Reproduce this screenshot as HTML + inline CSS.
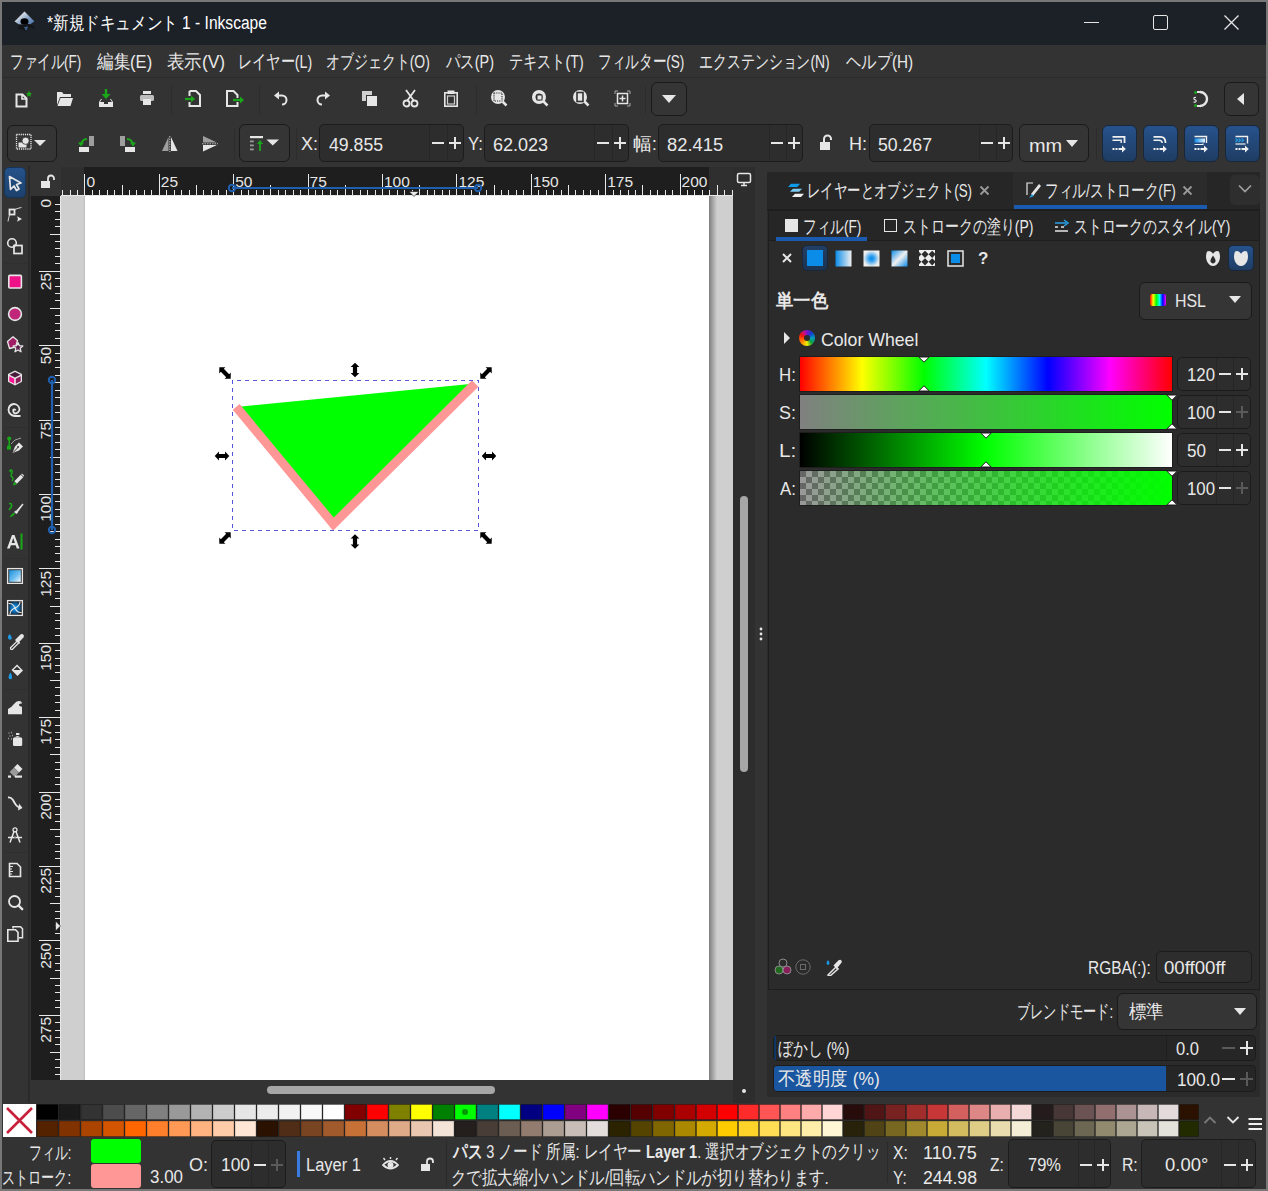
<!DOCTYPE html><html><head><meta charset="utf-8"><style>
html,body{margin:0;padding:0;}
body{width:1268px;height:1191px;position:relative;overflow:hidden;background:#777777;font-family:"Liberation Sans",sans-serif;}
div{box-sizing:border-box;}
svg{display:block;}
</style></head><body>
<div style="position:absolute;left:2px;top:2px;width:1264px;height:1187px;background:#333333;"></div>
<div style="position:absolute;left:2px;top:2px;width:1264px;height:43px;background:#1c2128;"></div>
<div style="position:absolute;left:2px;top:77px;width:1264px;height:1px;background:#2b2b2b;"></div>
<svg style="position:absolute;left:13px;top:10px;" width="24" height="24" viewBox="0 0 24 24"><defs><linearGradient id="lg0" x1="0" y1="0" x2="1" y2="1"><stop offset="0.2" stop-color="#f2f2f2"/><stop offset="0.55" stop-color="#8aa5c8"/><stop offset="1" stop-color="#2f5f9a"/></linearGradient></defs><path d="M11.5 1 L22 11.5 L17 15 L12 16.5 L6 15 L1 11.5 Z" fill="url(#lg0)" stroke="#111" stroke-width="0.8"/><ellipse cx="11.5" cy="11.5" rx="4" ry="3.3" fill="#000"/><path d="M6 14.5 L16 14 L21 16.5 L15 18.5 L13 22 L10 19.5 L5 19 Z" fill="#151515"/><path d="M11 17 L15.5 16.5 L13 21 Z" fill="#3a5f8a"/><circle cx="20.5" cy="17.5" r="1" fill="#111"/></svg>
<div class="t" style="position:absolute;left:47.00px;top:11.50px;font-size:18px;line-height:23px;color:#ffffff;white-space:nowrap;transform:scaleX(0.8656);transform-origin:0 50%;">*新規ドキュメント 1 - Inkscape</div>
<div style="position:absolute;left:1084px;top:22px;width:15px;height:1px;background:#e6e6e6;"></div>
<div style="position:absolute;left:1153px;top:15px;width:15px;height:15px;border:1.5px solid #e6e6e6;border-radius:2px;"></div>
<svg style="position:absolute;left:1224px;top:15px;" width="15" height="15" viewBox="0 0 15 15"><path d="M0.5 0.5 L14.5 14.5 M14.5 0.5 L0.5 14.5" stroke="#e6e6e6" stroke-width="1.3"/></svg>
<div class="t" style="position:absolute;left:9.58px;top:49.10px;font-size:19px;line-height:25px;color:#e8e8e8;white-space:nowrap;transform:scaleX(0.7113);transform-origin:0 50%;">ファイル(F)</div>
<div class="t" style="position:absolute;left:97.00px;top:49.10px;font-size:19px;line-height:25px;color:#e8e8e8;white-space:nowrap;transform:scaleX(0.8710);transform-origin:0 50%;">編集(E)</div>
<div class="t" style="position:absolute;left:167.08px;top:49.10px;font-size:19px;line-height:25px;color:#e8e8e8;white-space:nowrap;transform:scaleX(0.9180);transform-origin:0 50%;">表示(V)</div>
<div class="t" style="position:absolute;left:237.76px;top:49.10px;font-size:19px;line-height:25px;color:#e8e8e8;white-space:nowrap;transform:scaleX(0.7474);transform-origin:0 50%;">レイヤー(L)</div>
<div class="t" style="position:absolute;left:326.27px;top:49.10px;font-size:19px;line-height:25px;color:#e8e8e8;white-space:nowrap;transform:scaleX(0.7338);transform-origin:0 50%;">オブジェクト(O)</div>
<div class="t" style="position:absolute;left:446.00px;top:49.10px;font-size:19px;line-height:25px;color:#e8e8e8;white-space:nowrap;transform:scaleX(0.7581);transform-origin:0 50%;">パス(P)</div>
<div class="t" style="position:absolute;left:509.26px;top:49.10px;font-size:19px;line-height:25px;color:#e8e8e8;white-space:nowrap;transform:scaleX(0.7449);transform-origin:0 50%;">テキスト(T)</div>
<div class="t" style="position:absolute;left:597.56px;top:49.10px;font-size:19px;line-height:25px;color:#e8e8e8;white-space:nowrap;transform:scaleX(0.7179);transform-origin:0 50%;">フィルター(S)</div>
<div class="t" style="position:absolute;left:699.27px;top:49.10px;font-size:19px;line-height:25px;color:#e8e8e8;white-space:nowrap;transform:scaleX(0.7330);transform-origin:0 50%;">エクステンション(N)</div>
<div class="t" style="position:absolute;left:846.00px;top:49.10px;font-size:19px;line-height:25px;color:#e8e8e8;white-space:nowrap;transform:scaleX(0.8049);transform-origin:0 50%;">ヘルプ(H)</div>
<div style="position:absolute;left:171px;top:86px;width:1px;height:28px;background:#2c2c2c;"></div>
<div style="position:absolute;left:259px;top:86px;width:1px;height:28px;background:#2c2c2c;"></div>
<div style="position:absolute;left:476px;top:86px;width:1px;height:28px;background:#2c2c2c;"></div>
<div style="position:absolute;left:645px;top:86px;width:1px;height:28px;background:#2c2c2c;"></div>
<svg style="position:absolute;left:14px;top:90px;" width="18" height="18" viewBox="0 0 18 18"><path d="M2.5 4.5 H8.5 L12.5 8.5 V16.5 H2.5 Z" fill="none" stroke="#e6e6e6" stroke-width="2" stroke-linejoin="miter"/><path d="M8 4 V9 H13" fill="none" stroke="#e6e6e6" stroke-width="1.6"/><path d="M15 0.5 L16 3 L18 3 L16.5 4.5 L17.2 7 L15 5.6 L12.8 7 L13.5 4.5 L12 3 L14 3Z" fill="#1aa81a"/></svg>
<svg style="position:absolute;left:56px;top:91px;" width="18" height="16" viewBox="0 0 18 16"><path d="M1 1 H6 L7.5 3 H15 V6 H4 L1 14 Z" fill="#e6e6e6"/><path d="M4.5 7 H17 L14.5 15 H1.5 Z" fill="#e6e6e6"/></svg>
<svg style="position:absolute;left:98px;top:88px;" width="16" height="20" viewBox="0 0 16 20"><path d="M8 1 V9" stroke="#1aa81a" stroke-width="2.4"/><path d="M3.5 6 L8 11 L12.5 6Z" fill="#1aa81a"/><path d="M3 11 L1 14 V19 H15 V14 L13 11 H12 L14 14 H10 V16 H6 V14 H2 L4 11Z" fill="#e6e6e6"/></svg>
<svg style="position:absolute;left:139px;top:90px;" width="16" height="16" viewBox="0 0 16 16"><rect x="4" y="1" width="8" height="3" fill="#e6e6e6"/><rect x="1" y="5" width="14" height="6" rx="1.5" fill="#bdbdbd"/><rect x="4" y="9" width="8" height="6" fill="#e6e6e6"/></svg>
<svg style="position:absolute;left:185px;top:90px;" width="18" height="17" viewBox="0 0 18 17"><path d="M4.5 1 H11 L15 5 V16 H4.5 V12 M4.5 6 V1" fill="none" stroke="#e6e6e6" stroke-width="2"/><path d="M0 9 H8" stroke="#1aa81a" stroke-width="2.2"/><path d="M6 5.5 L10 9 L6 12.5Z" fill="#1aa81a"/></svg>
<svg style="position:absolute;left:226px;top:90px;" width="20" height="17" viewBox="0 0 20 17"><path d="M11.5 8 V5 L7.5 1 H1 V16 H11.5 V12" fill="none" stroke="#e6e6e6" stroke-width="2"/><path d="M7 10 H15" stroke="#1aa81a" stroke-width="2.2"/><path d="M14 6.5 L18 10 L14 13.5Z" fill="#1aa81a"/></svg>
<svg style="position:absolute;left:273px;top:91px;" width="16" height="16" viewBox="0 0 16 16"><path d="M5 4.5 H9 A4.5 4.5 0 0 1 9 13.5" fill="none" stroke="#e6e6e6" stroke-width="2"/><path d="M1 4.5 L6 0.5 V8.5Z" fill="#e6e6e6"/></svg>
<svg style="position:absolute;left:315px;top:91px;" width="16" height="16" viewBox="0 0 16 16"><path d="M11 4.5 H7 A4.5 4.5 0 0 0 7 13.5" fill="none" stroke="#e6e6e6" stroke-width="2"/><path d="M15 4.5 L10 0.5 V8.5Z" fill="#e6e6e6"/></svg>
<svg style="position:absolute;left:361px;top:90px;" width="18" height="18" viewBox="0 0 18 18"><rect x="1" y="1" width="10" height="10" fill="#cfcfcf"/><rect x="5.5" y="5.5" width="11" height="11" fill="#e6e6e6" stroke="#333" stroke-width="1"/></svg>
<svg style="position:absolute;left:402px;top:89px;" width="18" height="19" viewBox="0 0 18 19"><path d="M4 1 L12 12 M13 1 L5 12" stroke="#e6e6e6" stroke-width="1.8"/><circle cx="4.5" cy="14.5" r="3" fill="none" stroke="#e6e6e6" stroke-width="1.8"/><circle cx="12.5" cy="14.5" r="3" fill="none" stroke="#e6e6e6" stroke-width="1.8"/></svg>
<svg style="position:absolute;left:443px;top:89px;" width="16" height="19" viewBox="0 0 16 19"><rect x="1.8" y="3.8" width="12.4" height="13.4" fill="none" stroke="#e6e6e6" stroke-width="1.6"/><rect x="4.5" y="1.5" width="7" height="3.5" fill="#e6e6e6"/><rect x="4.5" y="7" width="7" height="8" fill="none" stroke="#cfcfcf" stroke-width="1.2"/></svg>
<svg style="position:absolute;left:490px;top:89px;" width="18" height="18" viewBox="0 0 18 18"><circle cx="8" cy="8" r="7" fill="#e6e6e6"/><path d="M12 12 L16.5 16.5" stroke="#e6e6e6" stroke-width="2.5"/><rect x="4" y="4" width="8" height="8" fill="none" stroke="#333" stroke-width="1.2" stroke-dasharray="1.2 1"/></svg>
<svg style="position:absolute;left:531px;top:89px;" width="18" height="18" viewBox="0 0 18 18"><circle cx="8" cy="8" r="7" fill="#e6e6e6"/><path d="M12 12 L16.5 16.5" stroke="#e6e6e6" stroke-width="2.5"/><circle cx="8" cy="8" r="3.5" fill="#333"/><rect x="6" y="6" width="5" height="5" fill="#e6e6e6" stroke="#333"/></svg>
<svg style="position:absolute;left:572px;top:89px;" width="18" height="18" viewBox="0 0 18 18"><circle cx="8" cy="8" r="7" fill="#e6e6e6"/><path d="M12 12 L16.5 16.5" stroke="#e6e6e6" stroke-width="2.5"/><rect x="5" y="3.5" width="6" height="9" fill="none" stroke="#333" stroke-width="1.6"/></svg>
<svg style="position:absolute;left:614px;top:90px;" width="18" height="18" viewBox="0 0 18 18"><path d="M1 4 V1 H4 M13 1 H16 V4 M16 13 V16 H13 M4 16 H1 V13" fill="none" stroke="#aaa" stroke-width="1"/><rect x="3.5" y="3.5" width="10" height="10" fill="none" stroke="#e6e6e6" stroke-width="1.5"/><path d="M8.5 5.5 V11.5 M5.5 8.5 H11.5" stroke="#e6e6e6" stroke-width="1.5"/></svg>
<div style="position:absolute;left:651px;top:82px;width:36px;height:34px;background:#353535;border:1.5px solid #1a1a1a;border-radius:6px;"></div>
<svg style="position:absolute;left:661px;top:94px;" width="16" height="10" viewBox="0 0 16 10"><path d="M1 1 H15 L8 9Z" fill="#e6e6e6"/></svg>
<svg style="position:absolute;left:1191px;top:90px;" width="18" height="18" viewBox="0 0 18 18"><path d="M9 2 A7 7 0 1 1 9 16" fill="none" stroke="#e6e6e6" stroke-width="2.4"/><path d="M9 2 H6 M9 16 H6" stroke="#e6e6e6" stroke-width="2"/><circle cx="4.5" cy="2.5" r="1.5" fill="#1aa81a"/><circle cx="4.5" cy="15.5" r="1.5" fill="#1aa81a"/><path d="M5 7.5 Q3 7 2.8 8.5 Q3 9.5 4.2 9.8 Q5.5 10.3 5 11.5 Q4.5 12.5 2.5 12" fill="none" stroke="#e6e6e6" stroke-width="1.2"/></svg>
<div style="position:absolute;left:1224px;top:82px;width:35px;height:34px;background:#353535;border:1.5px solid #1a1a1a;border-radius:6px;"></div>
<svg style="position:absolute;left:1236px;top:92px;" width="10" height="14" viewBox="0 0 10 14"><path d="M8 1 V13 L1 7Z" fill="#e6e6e6"/></svg>
<div style="position:absolute;left:7px;top:125px;width:50px;height:37px;background:#353535;border:1.5px solid #1a1a1a;border-radius:6px;"></div>
<svg style="position:absolute;left:14px;top:132px;" width="36" height="20" viewBox="0 0 36 20"><rect x="2.5" y="2.5" width="14.5" height="14.5" fill="none" stroke="#e6e6e6" stroke-width="1.3" stroke-dasharray="1.2 0.9"/><rect x="4.5" y="10.5" width="8" height="5" fill="#e6e6e6"/><circle cx="11.6" cy="8.8" r="3.6" fill="#e6e6e6" stroke="#353535" stroke-width="0.8"/><path d="M20 8 H32 L26 14Z" fill="#e6e6e6"/></svg>
<div style="position:absolute;left:234px;top:128px;width:1px;height:32px;background:#2c2c2c;"></div>
<div style="position:absolute;left:296px;top:128px;width:1px;height:32px;background:#2c2c2c;"></div>
<div style="position:absolute;left:1096px;top:128px;width:1px;height:32px;background:#2c2c2c;"></div>
<svg style="position:absolute;left:78px;top:135px;" width="18" height="18" viewBox="0 0 18 18"><rect x="11" y="1" width="5" height="10" fill="#9e9e9e"/><rect x="1" y="12" width="10" height="5" fill="#e6e6e6"/><path d="M3 10 A6 6 0 0 1 9 4" fill="none" stroke="#1aa81a" stroke-width="1.8"/><path d="M0 7.5 L3 11.5 L6 7.5Z" fill="#1aa81a"/></svg>
<svg style="position:absolute;left:119px;top:135px;" width="18" height="18" viewBox="0 0 18 18"><rect x="1" y="1" width="5" height="10" fill="#9e9e9e"/><rect x="6" y="12" width="10" height="5" fill="#e6e6e6"/><path d="M8 4 A6 6 0 0 1 14 10" fill="none" stroke="#1aa81a" stroke-width="1.8"/><path d="M11 7.5 L14 11.5 L17 7.5Z" fill="#1aa81a"/></svg>
<svg style="position:absolute;left:161px;top:135px;" width="18" height="18" viewBox="0 0 18 18"><path d="M7.5 2 V16 L1 16Z" fill="#9e9e9e"/><path d="M10 2 V16 L16.5 16Z" fill="#e6e6e6"/><path d="M8.8 1 V17" stroke="#e6e6e6" stroke-width="0.8" stroke-dasharray="1.5 1"/></svg>
<svg style="position:absolute;left:201px;top:135px;" width="18" height="18" viewBox="0 0 18 18"><path d="M2 7.5 H16 L2 1Z" fill="#9e9e9e"/><path d="M2 10 H16 L2 16.5Z" fill="#e6e6e6"/><path d="M1 8.8 H17" stroke="#e6e6e6" stroke-width="0.8" stroke-dasharray="1.5 1"/></svg>
<div style="position:absolute;left:239px;top:124px;width:51px;height:38px;background:#353535;border:1.5px solid #1a1a1a;border-radius:6px;"></div>
<svg style="position:absolute;left:247px;top:132px;" width="36" height="22" viewBox="0 0 36 22"><rect x="3" y="4" width="13" height="2.2" fill="#e6e6e6"/><rect x="3" y="8.5" width="3.8" height="1.8" fill="#9a9a9a"/><rect x="3" y="12.5" width="3.8" height="1.8" fill="#9a9a9a"/><rect x="3" y="16.5" width="3.8" height="1.8" fill="#9a9a9a"/><path d="M13 19 V11" stroke="#1aa81a" stroke-width="1.8"/><path d="M10 12 L13 8 L16 12Z" fill="#1aa81a"/><path d="M19.5 7.5 H32 L25.75 13.5Z" fill="#e6e6e6"/></svg>
<div class="t" style="position:absolute;left:301.00px;top:133.30px;font-size:18px;line-height:23px;color:#e8e8e8;white-space:nowrap;">X:</div>
<div style="position:absolute;left:319px;top:124px;width:145px;height:38px;background:#2d2d2d;border:1px solid #1c1c1c;border-radius:5px;"></div>
<div style="position:absolute;left:429px;top:125px;width:1px;height:36px;background:#262626;"></div>
<div style="position:absolute;left:447px;top:125px;width:1px;height:36px;background:#262626;"></div>
<div class="t" style="position:absolute;left:329.00px;top:133.80px;font-size:18px;line-height:23px;color:#e8e8e8;white-space:nowrap;transform:scaleX(0.9815);transform-origin:0 50%;">49.855</div>
<div style="position:absolute;left:432px;top:142px;width:12px;height:2px;background:#e6e6e6;"></div>
<div style="position:absolute;left:449px;top:142px;width:12px;height:2px;background:#e6e6e6;"></div>
<div style="position:absolute;left:454px;top:137px;width:2px;height:12px;background:#e6e6e6;"></div>
<div class="t" style="position:absolute;left:468.07px;top:133.30px;font-size:18px;line-height:23px;color:#e8e8e8;white-space:nowrap;transform:scaleX(0.9286);transform-origin:0 50%;">Y:</div>
<div style="position:absolute;left:484px;top:124px;width:145px;height:38px;background:#2d2d2d;border:1px solid #1c1c1c;border-radius:5px;"></div>
<div style="position:absolute;left:594px;top:125px;width:1px;height:36px;background:#262626;"></div>
<div style="position:absolute;left:612px;top:125px;width:1px;height:36px;background:#262626;"></div>
<div class="t" style="position:absolute;left:493.00px;top:133.80px;font-size:18px;line-height:23px;color:#e8e8e8;white-space:nowrap;">62.023</div>
<div style="position:absolute;left:597px;top:142px;width:12px;height:2px;background:#e6e6e6;"></div>
<div style="position:absolute;left:614px;top:142px;width:12px;height:2px;background:#e6e6e6;"></div>
<div style="position:absolute;left:619px;top:137px;width:2px;height:12px;background:#e6e6e6;"></div>
<div class="t" style="position:absolute;left:632.95px;top:133.30px;font-size:18px;line-height:23px;color:#e8e8e8;white-space:nowrap;transform:scaleX(1.0476);transform-origin:0 50%;">幅:</div>
<div style="position:absolute;left:658px;top:124px;width:145px;height:38px;background:#2d2d2d;border:1px solid #1c1c1c;border-radius:5px;"></div>
<div style="position:absolute;left:769px;top:125px;width:1px;height:36px;background:#262626;"></div>
<div style="position:absolute;left:786px;top:125px;width:1px;height:36px;background:#262626;"></div>
<div class="t" style="position:absolute;left:666.98px;top:133.80px;font-size:18px;line-height:23px;color:#e8e8e8;white-space:nowrap;transform:scaleX(1.0189);transform-origin:0 50%;">82.415</div>
<div style="position:absolute;left:771px;top:142px;width:12px;height:2px;background:#e6e6e6;"></div>
<div style="position:absolute;left:788px;top:142px;width:12px;height:2px;background:#e6e6e6;"></div>
<div style="position:absolute;left:793px;top:137px;width:2px;height:12px;background:#e6e6e6;"></div>
<svg style="position:absolute;left:818px;top:134px;" width="18" height="18" viewBox="0 0 18 18"><path d="M6 8 V5 A3.5 3.5 0 0 1 13 5 V6" fill="none" stroke="#e6e6e6" stroke-width="2"/><rect x="2" y="8" width="10" height="8" fill="#e6e6e6"/></svg>
<div class="t" style="position:absolute;left:849.00px;top:133.30px;font-size:18px;line-height:23px;color:#e8e8e8;white-space:nowrap;">H:</div>
<div style="position:absolute;left:869px;top:124px;width:144px;height:38px;background:#2d2d2d;border:1px solid #1c1c1c;border-radius:5px;"></div>
<div style="position:absolute;left:979px;top:125px;width:1px;height:36px;background:#262626;"></div>
<div style="position:absolute;left:996px;top:125px;width:1px;height:36px;background:#262626;"></div>
<div class="t" style="position:absolute;left:878.02px;top:133.80px;font-size:18px;line-height:23px;color:#e8e8e8;white-space:nowrap;transform:scaleX(0.9811);transform-origin:0 50%;">50.267</div>
<div style="position:absolute;left:981px;top:142px;width:12px;height:2px;background:#e6e6e6;"></div>
<div style="position:absolute;left:998px;top:142px;width:12px;height:2px;background:#e6e6e6;"></div>
<div style="position:absolute;left:1003px;top:137px;width:2px;height:12px;background:#e6e6e6;"></div>
<div style="position:absolute;left:1019px;top:124px;width:70px;height:38px;background:#353535;border:1.5px solid #1a1a1a;border-radius:6px;"></div>
<div class="t" style="position:absolute;left:1028.89px;top:135.30px;font-size:18px;line-height:23px;color:#e8e8e8;white-space:nowrap;transform:scaleX(1.1071);transform-origin:0 50%;">mm</div>
<svg style="position:absolute;left:1065px;top:139px;" width="14" height="10" viewBox="0 0 14 10"><path d="M1 1 H13 L7 8Z" fill="#e6e6e6"/></svg>
<div style="position:absolute;left:1102px;top:125px;width:35px;height:37px;background:linear-gradient(#26528c,#1f3d63);border:1px solid #18273a;border-radius:6px;"></div>
<div style="position:absolute;left:1143px;top:125px;width:35px;height:37px;background:linear-gradient(#26528c,#1f3d63);border:1px solid #18273a;border-radius:6px;"></div>
<div style="position:absolute;left:1184px;top:125px;width:35px;height:37px;background:linear-gradient(#26528c,#1f3d63);border:1px solid #18273a;border-radius:6px;"></div>
<div style="position:absolute;left:1225px;top:125px;width:35px;height:37px;background:linear-gradient(#26528c,#1f3d63);border:1px solid #18273a;border-radius:6px;"></div>
<svg width="0" height="0" style="position:absolute"><defs><linearGradient id="bg3"><stop offset="0" stop-color="#0c8ce9"/><stop offset="1" stop-color="#e8f4ff"/></linearGradient></defs></svg>
<svg style="position:absolute;left:1102px;top:125px;" width="35" height="37" viewBox="0 0 35 37"><path d="M10.5 11.8 H22.5 V18" fill="none" stroke="#f0f0f0" stroke-width="1.8"/><path d="M10.5 15.2 H19.2 V18" fill="none" stroke="#f0f0f0" stroke-width="1.4"/><rect x="10.5" y="23" width="2" height="2" fill="#f0f0f0"/><rect x="13.5" y="23" width="2" height="2" fill="#f0f0f0"/><path d="M16.5 24 H22" stroke="#f0f0f0" stroke-width="2"/><path d="M20 20.5 L23.8 24 L20 27.5Z" fill="#f0f0f0"/></svg>
<svg style="position:absolute;left:1143px;top:125px;" width="35" height="37" viewBox="0 0 35 37"><path d="M10.5 11.8 H17.5 Q22.5 11.8 22.5 18" fill="none" stroke="#f0f0f0" stroke-width="1.8"/><path d="M10.5 15.2 H16 Q19.2 15.2 19.2 18" fill="none" stroke="#f0f0f0" stroke-width="1.4"/><rect x="10.5" y="23" width="2" height="2" fill="#f0f0f0"/><rect x="13.5" y="23" width="2" height="2" fill="#f0f0f0"/><path d="M16.5 24 H22" stroke="#f0f0f0" stroke-width="2"/><path d="M20 20.5 L23.8 24 L20 27.5Z" fill="#f0f0f0"/></svg>
<svg style="position:absolute;left:1184px;top:125px;" width="35" height="37" viewBox="0 0 35 37"><path d="M10.5 11.5 H22.5 V18" fill="none" stroke="#f0f0f0" stroke-width="1.4"/><rect x="10.5" y="13.5" width="10.5" height="4" fill="url(#bg3)"/><path d="M10.5 19.5 H19 V18.5" fill="none" stroke="#f0f0f0" stroke-width="1.2"/><rect x="10.5" y="23" width="2" height="2" fill="#f0f0f0"/><rect x="13.5" y="23" width="2" height="2" fill="#f0f0f0"/><path d="M16.5 24 H22" stroke="#f0f0f0" stroke-width="2"/><path d="M20 20.5 L23.8 24 L20 27.5Z" fill="#f0f0f0"/></svg>
<svg style="position:absolute;left:1225px;top:125px;" width="35" height="37" viewBox="0 0 35 37"><path d="M10.5 11.5 H22.5 V18.5" fill="none" stroke="#f0f0f0" stroke-width="1.4"/><path d="M10.5 13.5 L12.5 15.2 L10.5 17 M13.5 13.5 L15.5 15.2 L13.5 17 M16.5 13.5 L18.5 15.2 L16.5 17" fill="none" stroke="#29a3e8" stroke-width="1.1"/><path d="M10.5 19 H20.5" stroke="#f0f0f0" stroke-width="1.2"/><rect x="10.5" y="23" width="2" height="2" fill="#f0f0f0"/><rect x="13.5" y="23" width="2" height="2" fill="#f0f0f0"/><path d="M16.5 24 H22" stroke="#f0f0f0" stroke-width="2"/><path d="M20 20.5 L23.8 24 L20 27.5Z" fill="#f0f0f0"/></svg>
<div style="position:absolute;left:28px;top:166px;width:2px;height:937px;background:#2a2a2a;"></div>
<div style="position:absolute;left:4px;top:167px;width:22px;height:31px;background:linear-gradient(#24528a,#1d416c);border:1px solid #173559;border-radius:5px;"></div>
<div style="position:absolute;left:4px;top:263px;width:24px;height:1px;background:#2f2f2f;"></div>
<div style="position:absolute;left:4px;top:427px;width:24px;height:1px;background:#2f2f2f;"></div>
<div style="position:absolute;left:4px;top:558px;width:24px;height:1px;background:#2f2f2f;"></div>
<div style="position:absolute;left:4px;top:689px;width:24px;height:1px;background:#2f2f2f;"></div>
<div style="position:absolute;left:4px;top:852px;width:24px;height:1px;background:#2f2f2f;"></div>
<svg width="0" height="0" style="position:absolute"><defs><linearGradient id="gr1" x1="0" y1="0" x2="1" y2="1"><stop offset="0" stop-color="#1a8fd8"/><stop offset="0.55" stop-color="#6fbff0"/><stop offset="1" stop-color="#f4f9ff"/></linearGradient><radialGradient id="mr1"><stop offset="0" stop-color="#29a8ff"/><stop offset="0.6" stop-color="#0b5fa0"/><stop offset="1" stop-color="#222"/></radialGradient></defs></svg>
<svg style="position:absolute;left:6px;top:174px;" width="18" height="18" viewBox="0 0 18 18"><path d="M3.5 2.5 L15 9 L10.5 10.5 L13 15 L10.5 16.5 L8 12 L4.5 15.5 Z" fill="none" stroke="#e6e6e6" stroke-width="1.7" stroke-linejoin="round"/></svg>
<svg style="position:absolute;left:6px;top:206px;" width="18" height="18" viewBox="0 0 18 18"><rect x="3.5" y="3.5" width="5" height="5" fill="none" stroke="#e6e6e6" stroke-width="1.8"/><path d="M9 3.5 Q12 2 15.5 1.5 M3.5 9 Q2.5 12 2 15.5" stroke="#e6e6e6" stroke-width="0.9" fill="none"/><path d="M11 10.2 L16 13 L11 15.8 L12 13Z" fill="#e6e6e6"/></svg>
<svg style="position:absolute;left:6px;top:237px;" width="18" height="18" viewBox="0 0 18 18"><circle cx="6" cy="6" r="4.3" fill="none" stroke="#e6e6e6" stroke-width="1.6"/><rect x="8" y="8.5" width="8" height="8" fill="none" stroke="#e6e6e6" stroke-width="1.7"/><path d="M7 9.5 L9.5 7" stroke="#e6e6e6" stroke-width="0.8"/></svg>
<svg style="position:absolute;left:6px;top:272px;" width="18" height="18" viewBox="0 0 18 18"><rect x="2.8" y="3.4" width="12.6" height="12.6" rx="1" fill="#ee1188" stroke="#e6e6e6" stroke-width="1.6"/></svg>
<svg style="position:absolute;left:6px;top:305px;" width="18" height="18" viewBox="0 0 18 18"><circle cx="9" cy="9" r="6.4" fill="#c0267a" stroke="#e6e6e6" stroke-width="1.6"/></svg>
<svg style="position:absolute;left:6px;top:336px;" width="18" height="18" viewBox="0 0 18 18"><path d="M1.5 5.5 L7 0.8 L11.5 4.5 L9.5 11 L3.5 12.5Z" fill="#a01e66" stroke="#e6e6e6" stroke-width="1.3" stroke-linejoin="round"/><path d="M12 6.5 L13.3 9.6 L16.8 10 L14.2 12.3 L15 15.8 L12 14 L9 15.8 L9.8 12.3 L7.2 10 L10.7 9.6Z" fill="#5a1e48" stroke="#e6e6e6" stroke-width="1.3" stroke-linejoin="round"/></svg>
<svg style="position:absolute;left:6px;top:369px;" width="18" height="18" viewBox="0 0 18 18"><path d="M9 1.5 L16 5 V12.8 L9 16.5 L2 12.8 V5Z" fill="#e6e6e6"/><path d="M9 3 L14.5 5.8 L9 8.5 L3.5 5.8Z" fill="#4a1a3a"/><path d="M3.3 7.2 L8.2 9.7 V14.8 L3.3 12.3Z" fill="#ff1493"/><path d="M14.7 7.2 L9.8 9.7 V14.8 L14.7 12.3Z" fill="#8b1e5a"/></svg>
<svg style="position:absolute;left:6px;top:401px;" width="18" height="18" viewBox="0 0 18 18"><path d="M9.5 9.5 A1.5 1.5 0 0 0 7.5 8.5 A3 3 0 0 0 9 12.5 A4.5 4.5 0 0 0 13.5 8 A5.8 5.8 0 0 0 7.5 3 A6.2 6.2 0 0 0 2.5 9 A6.5 6.5 0 0 0 9 15 H14.5" fill="none" stroke="#e6e6e6" stroke-width="1.8"/></svg>
<svg style="position:absolute;left:6px;top:436px;" width="18" height="18" viewBox="0 0 18 18"><circle cx="3.2" cy="2.5" r="2" fill="#1aa81a"/><path d="M3.2 3 V10" stroke="#1aa81a" stroke-width="1.5"/><rect x="1" y="9.6" width="4" height="4" fill="#1aa81a"/><path d="M5 8 Q8 3 15 2" fill="none" stroke="#bbb" stroke-width="0.8"/><path d="M6.5 17 L9 10.5 L13 6.5 L17 10.5 L13 14.5Z" fill="#e6e6e6"/><path d="M7 16.5 L11.5 12" stroke="#333" stroke-width="1"/><circle cx="12" cy="11" r="1" fill="#333"/></svg>
<svg style="position:absolute;left:6px;top:468px;" width="18" height="18" viewBox="0 0 18 18"><path d="M5 4 Q3 3 4.5 2 Q7 2 6 5 Q4 8 6 9 Q8 10 6 13" fill="none" stroke="#1aa81a" stroke-width="1.4"/><path d="M8.3 13.2 L14.7 6.8 L17.2 9.3 L10.8 15.7Z" fill="#e6e6e6"/><path d="M15.2 6.3 L16 5.5 L18 7.5 L17.7 8.8Z" fill="#e6e6e6"/><path d="M8 13.5 L11 16.5 L6.8 17.5Z" fill="#1aa81a"/></svg>
<svg style="position:absolute;left:6px;top:500px;" width="18" height="18" viewBox="0 0 18 18"><path d="M3 3.5 Q6 3 5.5 6 Q5 8 3 10" fill="none" stroke="#1aa81a" stroke-width="1.6"/><path d="M10 11 L16.5 3.5 L17.5 4.5 L11.5 12.5Z" fill="#e6e6e6"/><path d="M8 12 L10 10.5 L12 12.5 L10.5 14Z" fill="#e6e6e6"/><path d="M9 13.5 Q7 17 3.5 17 Q5 14 8 12.5Z" fill="#1aa81a"/></svg>
<svg style="position:absolute;left:6px;top:532px;" width="18" height="18" viewBox="0 0 18 18"><path d="M1 16.5 L6 3 H8.5 L13.5 16.5 H10.8 L9.7 13.3 H4.8 L3.7 16.5Z M5.6 11 H8.9 L7.25 6Z" fill="#e6e6e6" fill-rule="evenodd"/><rect x="14.5" y="1.5" width="2" height="16" fill="#1aa81a"/></svg>
<svg style="position:absolute;left:6px;top:566px;" width="18" height="18" viewBox="0 0 18 18"><rect x="1.6" y="2.6" width="14.8" height="14.8" fill="none" stroke="#e6e6e6" stroke-width="1.3"/><rect x="3.2" y="4.2" width="11.6" height="11.6" fill="url(#gr1)"/></svg>
<svg style="position:absolute;left:6px;top:599px;" width="18" height="18" viewBox="0 0 18 18"><rect x="1.6" y="1.6" width="14.8" height="14.8" fill="url(#mr1)" stroke="#e6e6e6" stroke-width="1.3"/><path d="M9 9 Q7 4 2.5 4.5 M9 9 Q14 7 14 2.5 M9 9 Q11 14 15.5 13.5 M9 9 Q4 11 4 15.5" fill="none" stroke="#e6e6e6" stroke-width="1.1"/></svg>
<svg style="position:absolute;left:6px;top:632px;" width="18" height="18" viewBox="0 0 18 18"><path d="M3.5 2 Q1 5 2.5 7 Q4.5 8.5 6 6.5 Q6 4.5 3.5 2Z" fill="#1a9ae8"/><path d="M4.5 15.8 L11.5 8.8 L13.2 10.5 L6.2 17.5 Q4.5 18 4.5 15.8Z" fill="none" stroke="#e6e6e6" stroke-width="1.3"/><path d="M10.5 7.5 L14.5 3.5 Q16 2 17 3.5 Q17.5 5 16 6 L12 10Z M9.5 7.5 L13.5 11.5" stroke="#e6e6e6" stroke-width="1.5" fill="#e6e6e6"/></svg>
<svg style="position:absolute;left:6px;top:664px;" width="18" height="18" viewBox="0 0 18 18"><path d="M5.5 6 L11 0.5 L17 6.5 L11.5 12Z" fill="#e6e6e6"/><path d="M7.5 6 L11 2.5 L14.5 6Z" fill="#333"/><path d="M4.5 8.5 Q2 11.5 2.5 14 Q4 16 5.5 15 Q7 13.5 4.5 8.5Z" fill="#1a9ae8"/></svg>
<svg style="position:absolute;left:6px;top:697px;" width="18" height="18" viewBox="0 0 18 18"><path d="M2 17.2 V12 Q5 11 8 7 Q11 3 14.5 4.3 Q16 5 16 6.5 Q14 6 13 7.5 Q13 9.5 16 9.8 V17.2Z" fill="#e6e6e6"/></svg>
<svg style="position:absolute;left:6px;top:731px;" width="18" height="18" viewBox="0 0 18 18"><rect x="7" y="6.5" width="9.2" height="8.5" rx="1.3" fill="#e6e6e6"/><path d="M8.5 6.5 Q11.5 3.5 14.5 6.5Z" fill="#e6e6e6"/><rect x="10" y="2" width="3.4" height="2" fill="#e6e6e6"/><path d="M2.5 2 h1 M5 1.5 h1 M3.5 5 h1 M6 4.5 h1 M2 7.5 h1 M5 8 h1" stroke="#9a9a9a" stroke-width="1.3"/></svg>
<svg style="position:absolute;left:6px;top:763px;" width="18" height="18" viewBox="0 0 18 18"><path d="M8 4.5 L11.5 1 L16.5 6 L13 9.5Z" fill="#e6e6e6"/><path d="M3.6 8.9 L8 4.5 L13 9.5 L8.6 13.9Z" fill="#9a9a9a"/><rect x="2" y="12.5" width="3" height="2.2" fill="#e6e6e6"/><rect x="9" y="12.5" width="7" height="2.2" fill="#e6e6e6"/></svg>
<svg style="position:absolute;left:6px;top:795px;" width="18" height="18" viewBox="0 0 18 18"><path d="M2 2.5 Q5 2 7 5 Q8.5 8 10 10 Q11.5 12 13.5 12.5" fill="none" stroke="#e6e6e6" stroke-width="1.8"/><path d="M13 8.5 L16.5 13 L12 15.5Z" fill="#e6e6e6"/></svg>
<svg style="position:absolute;left:6px;top:827px;" width="18" height="18" viewBox="0 0 18 18"><circle cx="9" cy="2.8" r="2" fill="none" stroke="#e6e6e6" stroke-width="1.3"/><path d="M8 4.5 L4 15.5 M10 4.5 L14 15.5 M2 10.5 H16" fill="none" stroke="#e6e6e6" stroke-width="1.5"/><circle cx="9" cy="10.5" r="1" fill="#999"/></svg>
<svg style="position:absolute;left:6px;top:860px;" width="18" height="18" viewBox="0 0 18 18"><path d="M3.5 3.5 H11 L14.5 7 V16.5 H3.5Z" fill="none" stroke="#e6e6e6" stroke-width="1.6"/><path d="M4 6.5 H7 M4 9 H6 M4 11.5 H7 M4 14 H6" stroke="#e6e6e6" stroke-width="1.1"/></svg>
<svg style="position:absolute;left:6px;top:894px;" width="18" height="18" viewBox="0 0 18 18"><circle cx="8.5" cy="7.5" r="5.5" fill="none" stroke="#e6e6e6" stroke-width="1.8"/><path d="M12.5 11.5 L16.2 15.2" stroke="#e6e6e6" stroke-width="2.4" stroke-linecap="round"/></svg>
<svg style="position:absolute;left:6px;top:925px;" width="18" height="18" viewBox="0 0 18 18"><path d="M7 3.5 V1.8 H14.5 L16.5 3.8 V12.8 H13" fill="none" stroke="#e6e6e6" stroke-width="1.5"/><path d="M1.8 4.8 H9.5 L12 7.3 V16.2 H1.8Z" fill="#333" stroke="#e6e6e6" stroke-width="1.6"/></svg>
<div style="position:absolute;left:31px;top:167px;width:30px;height:29px;background:#333;"></div>
<svg style="position:absolute;left:40px;top:174px;" width="16" height="16" viewBox="0 0 16 16"><path d="M8 7 V4.5 A3 3 0 0 1 14 4.5 V6" fill="none" stroke="#e6e6e6" stroke-width="1.8"/><rect x="1" y="7" width="9" height="7" fill="#e6e6e6"/></svg>
<div style="position:absolute;left:61px;top:167px;width:672px;height:29px;background:#2f2f2f;"></div>
<div style="position:absolute;left:84px;top:167px;width:625px;height:29px;background:#1e1e1e;"></div>
<div style="position:absolute;left:31px;top:196px;width:29px;height:884px;background:#1e1e1e;"></div>
<svg style="position:absolute;left:61px;top:167px;" width="672" height="29" viewBox="0 0 672 29"><path d="M1.5 23 V29" stroke="#e8e8e8" stroke-width="1"/><path d="M9.5 23 V29" stroke="#e8e8e8" stroke-width="1"/><path d="M16.5 23 V29" stroke="#e8e8e8" stroke-width="1"/><path d="M23.5 7 V29" stroke="#e8e8e8" stroke-width="1"/><path d="M31.5 23 V29" stroke="#e8e8e8" stroke-width="1"/><path d="M38.5 23 V29" stroke="#e8e8e8" stroke-width="1"/><path d="M46.5 23 V29" stroke="#e8e8e8" stroke-width="1"/><path d="M53.5 23 V29" stroke="#e8e8e8" stroke-width="1"/><path d="M61.5 18 V29" stroke="#e8e8e8" stroke-width="1"/><path d="M68.5 23 V29" stroke="#e8e8e8" stroke-width="1"/><path d="M75.5 23 V29" stroke="#e8e8e8" stroke-width="1"/><path d="M83.5 23 V29" stroke="#e8e8e8" stroke-width="1"/><path d="M90.5 23 V29" stroke="#e8e8e8" stroke-width="1"/><path d="M98.5 7 V29" stroke="#e8e8e8" stroke-width="1"/><path d="M105.5 23 V29" stroke="#e8e8e8" stroke-width="1"/><path d="M113.5 23 V29" stroke="#e8e8e8" stroke-width="1"/><path d="M120.5 23 V29" stroke="#e8e8e8" stroke-width="1"/><path d="M128.5 23 V29" stroke="#e8e8e8" stroke-width="1"/><path d="M135.5 18 V29" stroke="#e8e8e8" stroke-width="1"/><path d="M142.5 23 V29" stroke="#e8e8e8" stroke-width="1"/><path d="M150.5 23 V29" stroke="#e8e8e8" stroke-width="1"/><path d="M157.5 23 V29" stroke="#e8e8e8" stroke-width="1"/><path d="M165.5 23 V29" stroke="#e8e8e8" stroke-width="1"/><path d="M172.5 7 V29" stroke="#e8e8e8" stroke-width="1"/><path d="M180.5 23 V29" stroke="#e8e8e8" stroke-width="1"/><path d="M187.5 23 V29" stroke="#e8e8e8" stroke-width="1"/><path d="M195.5 23 V29" stroke="#e8e8e8" stroke-width="1"/><path d="M202.5 23 V29" stroke="#e8e8e8" stroke-width="1"/><path d="M209.5 18 V29" stroke="#e8e8e8" stroke-width="1"/><path d="M217.5 23 V29" stroke="#e8e8e8" stroke-width="1"/><path d="M224.5 23 V29" stroke="#e8e8e8" stroke-width="1"/><path d="M232.5 23 V29" stroke="#e8e8e8" stroke-width="1"/><path d="M239.5 23 V29" stroke="#e8e8e8" stroke-width="1"/><path d="M247.5 7 V29" stroke="#e8e8e8" stroke-width="1"/><path d="M254.5 23 V29" stroke="#e8e8e8" stroke-width="1"/><path d="M261.5 23 V29" stroke="#e8e8e8" stroke-width="1"/><path d="M269.5 23 V29" stroke="#e8e8e8" stroke-width="1"/><path d="M276.5 23 V29" stroke="#e8e8e8" stroke-width="1"/><path d="M284.5 18 V29" stroke="#e8e8e8" stroke-width="1"/><path d="M291.5 23 V29" stroke="#e8e8e8" stroke-width="1"/><path d="M299.5 23 V29" stroke="#e8e8e8" stroke-width="1"/><path d="M306.5 23 V29" stroke="#e8e8e8" stroke-width="1"/><path d="M314.5 23 V29" stroke="#e8e8e8" stroke-width="1"/><path d="M321.5 7 V29" stroke="#e8e8e8" stroke-width="1"/><path d="M328.5 23 V29" stroke="#e8e8e8" stroke-width="1"/><path d="M336.5 23 V29" stroke="#e8e8e8" stroke-width="1"/><path d="M343.5 23 V29" stroke="#e8e8e8" stroke-width="1"/><path d="M351.5 23 V29" stroke="#e8e8e8" stroke-width="1"/><path d="M358.5 18 V29" stroke="#e8e8e8" stroke-width="1"/><path d="M366.5 23 V29" stroke="#e8e8e8" stroke-width="1"/><path d="M373.5 23 V29" stroke="#e8e8e8" stroke-width="1"/><path d="M381.5 23 V29" stroke="#e8e8e8" stroke-width="1"/><path d="M388.5 23 V29" stroke="#e8e8e8" stroke-width="1"/><path d="M395.5 7 V29" stroke="#e8e8e8" stroke-width="1"/><path d="M403.5 23 V29" stroke="#e8e8e8" stroke-width="1"/><path d="M410.5 23 V29" stroke="#e8e8e8" stroke-width="1"/><path d="M418.5 23 V29" stroke="#e8e8e8" stroke-width="1"/><path d="M425.5 23 V29" stroke="#e8e8e8" stroke-width="1"/><path d="M433.5 18 V29" stroke="#e8e8e8" stroke-width="1"/><path d="M440.5 23 V29" stroke="#e8e8e8" stroke-width="1"/><path d="M447.5 23 V29" stroke="#e8e8e8" stroke-width="1"/><path d="M455.5 23 V29" stroke="#e8e8e8" stroke-width="1"/><path d="M462.5 23 V29" stroke="#e8e8e8" stroke-width="1"/><path d="M470.5 7 V29" stroke="#e8e8e8" stroke-width="1"/><path d="M477.5 23 V29" stroke="#e8e8e8" stroke-width="1"/><path d="M485.5 23 V29" stroke="#e8e8e8" stroke-width="1"/><path d="M492.5 23 V29" stroke="#e8e8e8" stroke-width="1"/><path d="M500.5 23 V29" stroke="#e8e8e8" stroke-width="1"/><path d="M507.5 18 V29" stroke="#e8e8e8" stroke-width="1"/><path d="M514.5 23 V29" stroke="#e8e8e8" stroke-width="1"/><path d="M522.5 23 V29" stroke="#e8e8e8" stroke-width="1"/><path d="M529.5 23 V29" stroke="#e8e8e8" stroke-width="1"/><path d="M537.5 23 V29" stroke="#e8e8e8" stroke-width="1"/><path d="M544.5 7 V29" stroke="#e8e8e8" stroke-width="1"/><path d="M552.5 23 V29" stroke="#e8e8e8" stroke-width="1"/><path d="M559.5 23 V29" stroke="#e8e8e8" stroke-width="1"/><path d="M567.5 23 V29" stroke="#e8e8e8" stroke-width="1"/><path d="M574.5 23 V29" stroke="#e8e8e8" stroke-width="1"/><path d="M581.5 18 V29" stroke="#e8e8e8" stroke-width="1"/><path d="M589.5 23 V29" stroke="#e8e8e8" stroke-width="1"/><path d="M596.5 23 V29" stroke="#e8e8e8" stroke-width="1"/><path d="M604.5 23 V29" stroke="#e8e8e8" stroke-width="1"/><path d="M611.5 23 V29" stroke="#e8e8e8" stroke-width="1"/><path d="M619.5 7 V29" stroke="#e8e8e8" stroke-width="1"/><path d="M626.5 23 V29" stroke="#e8e8e8" stroke-width="1"/><path d="M633.5 23 V29" stroke="#e8e8e8" stroke-width="1"/><path d="M641.5 23 V29" stroke="#e8e8e8" stroke-width="1"/><path d="M648.5 23 V29" stroke="#e8e8e8" stroke-width="1"/><path d="M656.5 18 V29" stroke="#e8e8e8" stroke-width="1"/><path d="M663.5 23 V29" stroke="#e8e8e8" stroke-width="1"/><path d="M671.5 23 V29" stroke="#e8e8e8" stroke-width="1"/></svg>
<div style="position:absolute;left:86.4px;top:172px;font-size:15.5px;line-height:19px;color:#e6e6e6">0</div>
<div style="position:absolute;left:160.8px;top:172px;font-size:15.5px;line-height:19px;color:#e6e6e6">25</div>
<div style="position:absolute;left:235.2px;top:172px;font-size:15.5px;line-height:19px;color:#e6e6e6">50</div>
<div style="position:absolute;left:309.6px;top:172px;font-size:15.5px;line-height:19px;color:#e6e6e6">75</div>
<div style="position:absolute;left:384.0px;top:172px;font-size:15.5px;line-height:19px;color:#e6e6e6">100</div>
<div style="position:absolute;left:458.4px;top:172px;font-size:15.5px;line-height:19px;color:#e6e6e6">125</div>
<div style="position:absolute;left:532.8px;top:172px;font-size:15.5px;line-height:19px;color:#e6e6e6">150</div>
<div style="position:absolute;left:607.2px;top:172px;font-size:15.5px;line-height:19px;color:#e6e6e6">175</div>
<div style="position:absolute;left:681.6px;top:172px;font-size:15.5px;line-height:19px;color:#e6e6e6">200</div>
<svg style="position:absolute;left:31px;top:196px;" width="29" height="884" viewBox="0 0 29 884"><path d="M24 8.5 H29" stroke="#e8e8e8" stroke-width="1"/><path d="M24 15.5 H29" stroke="#e8e8e8" stroke-width="1"/><path d="M24 23.5 H29" stroke="#e8e8e8" stroke-width="1"/><path d="M24 30.5 H29" stroke="#e8e8e8" stroke-width="1"/><path d="M19 38.5 H29" stroke="#e8e8e8" stroke-width="1"/><path d="M24 45.5 H29" stroke="#e8e8e8" stroke-width="1"/><path d="M24 52.5 H29" stroke="#e8e8e8" stroke-width="1"/><path d="M24 60.5 H29" stroke="#e8e8e8" stroke-width="1"/><path d="M24 67.5 H29" stroke="#e8e8e8" stroke-width="1"/><path d="M8 75.5 H29" stroke="#e8e8e8" stroke-width="1"/><path d="M24 82.5 H29" stroke="#e8e8e8" stroke-width="1"/><path d="M24 90.5 H29" stroke="#e8e8e8" stroke-width="1"/><path d="M24 97.5 H29" stroke="#e8e8e8" stroke-width="1"/><path d="M24 104.5 H29" stroke="#e8e8e8" stroke-width="1"/><path d="M19 112.5 H29" stroke="#e8e8e8" stroke-width="1"/><path d="M24 119.5 H29" stroke="#e8e8e8" stroke-width="1"/><path d="M24 127.5 H29" stroke="#e8e8e8" stroke-width="1"/><path d="M24 134.5 H29" stroke="#e8e8e8" stroke-width="1"/><path d="M24 142.5 H29" stroke="#e8e8e8" stroke-width="1"/><path d="M8 149.5 H29" stroke="#e8e8e8" stroke-width="1"/><path d="M24 157.5 H29" stroke="#e8e8e8" stroke-width="1"/><path d="M24 164.5 H29" stroke="#e8e8e8" stroke-width="1"/><path d="M24 171.5 H29" stroke="#e8e8e8" stroke-width="1"/><path d="M24 179.5 H29" stroke="#e8e8e8" stroke-width="1"/><path d="M19 186.5 H29" stroke="#e8e8e8" stroke-width="1"/><path d="M24 194.5 H29" stroke="#e8e8e8" stroke-width="1"/><path d="M24 201.5 H29" stroke="#e8e8e8" stroke-width="1"/><path d="M24 209.5 H29" stroke="#e8e8e8" stroke-width="1"/><path d="M24 216.5 H29" stroke="#e8e8e8" stroke-width="1"/><path d="M8 224.5 H29" stroke="#e8e8e8" stroke-width="1"/><path d="M24 231.5 H29" stroke="#e8e8e8" stroke-width="1"/><path d="M24 238.5 H29" stroke="#e8e8e8" stroke-width="1"/><path d="M24 246.5 H29" stroke="#e8e8e8" stroke-width="1"/><path d="M24 253.5 H29" stroke="#e8e8e8" stroke-width="1"/><path d="M19 261.5 H29" stroke="#e8e8e8" stroke-width="1"/><path d="M24 268.5 H29" stroke="#e8e8e8" stroke-width="1"/><path d="M24 276.5 H29" stroke="#e8e8e8" stroke-width="1"/><path d="M24 283.5 H29" stroke="#e8e8e8" stroke-width="1"/><path d="M24 290.5 H29" stroke="#e8e8e8" stroke-width="1"/><path d="M8 298.5 H29" stroke="#e8e8e8" stroke-width="1"/><path d="M24 305.5 H29" stroke="#e8e8e8" stroke-width="1"/><path d="M24 313.5 H29" stroke="#e8e8e8" stroke-width="1"/><path d="M24 320.5 H29" stroke="#e8e8e8" stroke-width="1"/><path d="M24 328.5 H29" stroke="#e8e8e8" stroke-width="1"/><path d="M19 335.5 H29" stroke="#e8e8e8" stroke-width="1"/><path d="M24 343.5 H29" stroke="#e8e8e8" stroke-width="1"/><path d="M24 350.5 H29" stroke="#e8e8e8" stroke-width="1"/><path d="M24 357.5 H29" stroke="#e8e8e8" stroke-width="1"/><path d="M24 365.5 H29" stroke="#e8e8e8" stroke-width="1"/><path d="M8 372.5 H29" stroke="#e8e8e8" stroke-width="1"/><path d="M24 380.5 H29" stroke="#e8e8e8" stroke-width="1"/><path d="M24 387.5 H29" stroke="#e8e8e8" stroke-width="1"/><path d="M24 395.5 H29" stroke="#e8e8e8" stroke-width="1"/><path d="M24 402.5 H29" stroke="#e8e8e8" stroke-width="1"/><path d="M19 410.5 H29" stroke="#e8e8e8" stroke-width="1"/><path d="M24 417.5 H29" stroke="#e8e8e8" stroke-width="1"/><path d="M24 424.5 H29" stroke="#e8e8e8" stroke-width="1"/><path d="M24 432.5 H29" stroke="#e8e8e8" stroke-width="1"/><path d="M24 439.5 H29" stroke="#e8e8e8" stroke-width="1"/><path d="M8 447.5 H29" stroke="#e8e8e8" stroke-width="1"/><path d="M24 454.5 H29" stroke="#e8e8e8" stroke-width="1"/><path d="M24 462.5 H29" stroke="#e8e8e8" stroke-width="1"/><path d="M24 469.5 H29" stroke="#e8e8e8" stroke-width="1"/><path d="M24 476.5 H29" stroke="#e8e8e8" stroke-width="1"/><path d="M19 484.5 H29" stroke="#e8e8e8" stroke-width="1"/><path d="M24 491.5 H29" stroke="#e8e8e8" stroke-width="1"/><path d="M24 499.5 H29" stroke="#e8e8e8" stroke-width="1"/><path d="M24 506.5 H29" stroke="#e8e8e8" stroke-width="1"/><path d="M24 514.5 H29" stroke="#e8e8e8" stroke-width="1"/><path d="M8 521.5 H29" stroke="#e8e8e8" stroke-width="1"/><path d="M24 529.5 H29" stroke="#e8e8e8" stroke-width="1"/><path d="M24 536.5 H29" stroke="#e8e8e8" stroke-width="1"/><path d="M24 543.5 H29" stroke="#e8e8e8" stroke-width="1"/><path d="M24 551.5 H29" stroke="#e8e8e8" stroke-width="1"/><path d="M19 558.5 H29" stroke="#e8e8e8" stroke-width="1"/><path d="M24 566.5 H29" stroke="#e8e8e8" stroke-width="1"/><path d="M24 573.5 H29" stroke="#e8e8e8" stroke-width="1"/><path d="M24 581.5 H29" stroke="#e8e8e8" stroke-width="1"/><path d="M24 588.5 H29" stroke="#e8e8e8" stroke-width="1"/><path d="M8 596.5 H29" stroke="#e8e8e8" stroke-width="1"/><path d="M24 603.5 H29" stroke="#e8e8e8" stroke-width="1"/><path d="M24 610.5 H29" stroke="#e8e8e8" stroke-width="1"/><path d="M24 618.5 H29" stroke="#e8e8e8" stroke-width="1"/><path d="M24 625.5 H29" stroke="#e8e8e8" stroke-width="1"/><path d="M19 633.5 H29" stroke="#e8e8e8" stroke-width="1"/><path d="M24 640.5 H29" stroke="#e8e8e8" stroke-width="1"/><path d="M24 648.5 H29" stroke="#e8e8e8" stroke-width="1"/><path d="M24 655.5 H29" stroke="#e8e8e8" stroke-width="1"/><path d="M24 662.5 H29" stroke="#e8e8e8" stroke-width="1"/><path d="M8 670.5 H29" stroke="#e8e8e8" stroke-width="1"/><path d="M24 677.5 H29" stroke="#e8e8e8" stroke-width="1"/><path d="M24 685.5 H29" stroke="#e8e8e8" stroke-width="1"/><path d="M24 692.5 H29" stroke="#e8e8e8" stroke-width="1"/><path d="M24 700.5 H29" stroke="#e8e8e8" stroke-width="1"/><path d="M19 707.5 H29" stroke="#e8e8e8" stroke-width="1"/><path d="M24 715.5 H29" stroke="#e8e8e8" stroke-width="1"/><path d="M24 722.5 H29" stroke="#e8e8e8" stroke-width="1"/><path d="M24 729.5 H29" stroke="#e8e8e8" stroke-width="1"/><path d="M24 737.5 H29" stroke="#e8e8e8" stroke-width="1"/><path d="M8 744.5 H29" stroke="#e8e8e8" stroke-width="1"/><path d="M24 752.5 H29" stroke="#e8e8e8" stroke-width="1"/><path d="M24 759.5 H29" stroke="#e8e8e8" stroke-width="1"/><path d="M24 767.5 H29" stroke="#e8e8e8" stroke-width="1"/><path d="M24 774.5 H29" stroke="#e8e8e8" stroke-width="1"/><path d="M19 782.5 H29" stroke="#e8e8e8" stroke-width="1"/><path d="M24 789.5 H29" stroke="#e8e8e8" stroke-width="1"/><path d="M24 796.5 H29" stroke="#e8e8e8" stroke-width="1"/><path d="M24 804.5 H29" stroke="#e8e8e8" stroke-width="1"/><path d="M24 811.5 H29" stroke="#e8e8e8" stroke-width="1"/><path d="M8 819.5 H29" stroke="#e8e8e8" stroke-width="1"/><path d="M24 826.5 H29" stroke="#e8e8e8" stroke-width="1"/><path d="M24 834.5 H29" stroke="#e8e8e8" stroke-width="1"/><path d="M24 841.5 H29" stroke="#e8e8e8" stroke-width="1"/><path d="M24 848.5 H29" stroke="#e8e8e8" stroke-width="1"/><path d="M19 856.5 H29" stroke="#e8e8e8" stroke-width="1"/><path d="M24 863.5 H29" stroke="#e8e8e8" stroke-width="1"/><path d="M24 871.5 H29" stroke="#e8e8e8" stroke-width="1"/><path d="M24 878.5 H29" stroke="#e8e8e8" stroke-width="1"/></svg>
<div style="position:absolute;left:36px;top:198.6px;width:19px;height:30px;"><div style="position:absolute;left:0;top:0;font-size:15.5px;line-height:19px;color:#e6e6e6;white-space:nowrap;transform:translate(0px,8.6px) rotate(-90deg);transform-origin:0 0">0</div></div>
<div style="position:absolute;left:36px;top:273.0px;width:19px;height:30px;"><div style="position:absolute;left:0;top:0;font-size:15.5px;line-height:19px;color:#e6e6e6;white-space:nowrap;transform:translate(0px,17.2px) rotate(-90deg);transform-origin:0 0">25</div></div>
<div style="position:absolute;left:36px;top:347.4px;width:19px;height:30px;"><div style="position:absolute;left:0;top:0;font-size:15.5px;line-height:19px;color:#e6e6e6;white-space:nowrap;transform:translate(0px,17.2px) rotate(-90deg);transform-origin:0 0">50</div></div>
<div style="position:absolute;left:36px;top:421.8px;width:19px;height:30px;"><div style="position:absolute;left:0;top:0;font-size:15.5px;line-height:19px;color:#e6e6e6;white-space:nowrap;transform:translate(0px,17.2px) rotate(-90deg);transform-origin:0 0">75</div></div>
<div style="position:absolute;left:36px;top:496.2px;width:19px;height:30px;"><div style="position:absolute;left:0;top:0;font-size:15.5px;line-height:19px;color:#e6e6e6;white-space:nowrap;transform:translate(0px,25.8px) rotate(-90deg);transform-origin:0 0">100</div></div>
<div style="position:absolute;left:36px;top:570.6px;width:19px;height:30px;"><div style="position:absolute;left:0;top:0;font-size:15.5px;line-height:19px;color:#e6e6e6;white-space:nowrap;transform:translate(0px,25.8px) rotate(-90deg);transform-origin:0 0">125</div></div>
<div style="position:absolute;left:36px;top:645.0px;width:19px;height:30px;"><div style="position:absolute;left:0;top:0;font-size:15.5px;line-height:19px;color:#e6e6e6;white-space:nowrap;transform:translate(0px,25.8px) rotate(-90deg);transform-origin:0 0">150</div></div>
<div style="position:absolute;left:36px;top:719.4px;width:19px;height:30px;"><div style="position:absolute;left:0;top:0;font-size:15.5px;line-height:19px;color:#e6e6e6;white-space:nowrap;transform:translate(0px,25.8px) rotate(-90deg);transform-origin:0 0">175</div></div>
<div style="position:absolute;left:36px;top:793.8px;width:19px;height:30px;"><div style="position:absolute;left:0;top:0;font-size:15.5px;line-height:19px;color:#e6e6e6;white-space:nowrap;transform:translate(0px,25.8px) rotate(-90deg);transform-origin:0 0">200</div></div>
<div style="position:absolute;left:36px;top:868.2px;width:19px;height:30px;"><div style="position:absolute;left:0;top:0;font-size:15.5px;line-height:19px;color:#e6e6e6;white-space:nowrap;transform:translate(0px,25.8px) rotate(-90deg);transform-origin:0 0">225</div></div>
<div style="position:absolute;left:36px;top:942.6px;width:19px;height:30px;"><div style="position:absolute;left:0;top:0;font-size:15.5px;line-height:19px;color:#e6e6e6;white-space:nowrap;transform:translate(0px,25.8px) rotate(-90deg);transform-origin:0 0">250</div></div>
<div style="position:absolute;left:36px;top:1017.0px;width:19px;height:30px;"><div style="position:absolute;left:0;top:0;font-size:15.5px;line-height:19px;color:#e6e6e6;white-space:nowrap;transform:translate(0px,25.8px) rotate(-90deg);transform-origin:0 0">275</div></div>
<svg style="position:absolute;left:61px;top:167px" width="672" height="29"><path d="M171 21 H417" stroke="#1f5fb0" stroke-width="2.2"/><circle cx="171" cy="21" r="3.2" fill="none" stroke="#1f5fb0" stroke-width="2"/><circle cx="417" cy="21" r="3.2" fill="none" stroke="#1f5fb0" stroke-width="2"/></svg>
<svg style="position:absolute;left:31px;top:196px" width="29" height="884"><path d="M21 184 V334" stroke="#1f5fb0" stroke-width="2.2"/><circle cx="21" cy="184" r="3.2" fill="none" stroke="#1f5fb0" stroke-width="2"/><circle cx="21" cy="334" r="3.2" fill="none" stroke="#1f5fb0" stroke-width="2"/></svg>
<div style="position:absolute;left:60px;top:196px;width:673px;height:884px;background:#cfcfcf;"></div>
<div style="position:absolute;left:83px;top:196px;width:2px;height:884px;background:linear-gradient(90deg,#cfcfcf,#bdbdbd);"></div>
<div style="position:absolute;left:709px;top:196px;width:8px;height:884px;background:linear-gradient(90deg,#7e7e7e,#cfcfcf);"></div>
<div style="position:absolute;left:85px;top:196px;width:624px;height:884px;background:#ffffff;"></div>
<div style="position:absolute;left:733px;top:167px;width:22px;height:936px;background:#2d2d2d;"></div>
<div style="position:absolute;left:740px;top:496px;width:8px;height:276px;background:#a6a6a6;border-radius:4px;"></div>
<div style="position:absolute;left:267px;top:1086px;width:228px;height:8px;background:#a6a6a6;border-radius:4px;"></div>
<svg style="position:absolute;left:736px;top:172px;" width="18" height="16" viewBox="0 0 18 16"><rect x="1.5" y="1.5" width="13" height="9" rx="1.5" fill="none" stroke="#e6e6e6" stroke-width="1.5"/><path d="M5 13.5 H11 M8 11 V13" stroke="#e6e6e6" stroke-width="1.5"/></svg>
<svg style="position:absolute;left:758px;top:626px;" width="6" height="16" viewBox="0 0 6 16"><circle cx="3" cy="3" r="1.4" fill="#e6e6e6"/><circle cx="3" cy="8" r="1.4" fill="#e6e6e6"/><circle cx="3" cy="13" r="1.4" fill="#e6e6e6"/></svg>
<div style="position:absolute;left:61px;top:195px;width:672px;height:1px;background:#e8e8e8;"></div>
<div style="position:absolute;left:60px;top:196px;width:1px;height:884px;background:#e8e8e8;"></div>
<svg style="position:absolute;left:408px;top:190px;" width="12" height="7" viewBox="0 0 12 7"><path d="M1 1.5 H11 L6 6.5Z" fill="#e8e8e8" stroke="#111" stroke-width="0.6"/></svg>
<svg style="position:absolute;left:54px;top:920px;" width="7" height="12" viewBox="0 0 7 12"><path d="M1.5 1 V11 L6.5 6Z" fill="#e8e8e8" stroke="#111" stroke-width="0.6"/></svg>
<svg style="position:absolute;left:200px;top:350px;" width="320" height="210" viewBox="0 0 320 210"><path d="M36.20 56.90 L133.40 174.10 L275.20 33.50 Z" fill="#00ff00"/><path d="M36.20 56.90 L133.40 174.10 L275.20 33.50" fill="none" stroke="#ff9797" stroke-width="8.9" stroke-linejoin="miter" stroke-miterlimit="4"/><path d="M32 30.5 H279" stroke="#5656d8" stroke-width="1" stroke-dasharray="4 4" stroke-dashoffset="3"/><path d="M32.5 30 V181" stroke="#5656d8" stroke-width="1" stroke-dasharray="4 4" stroke-dashoffset="0"/><path d="M278.5 30 V181" stroke="#5656d8" stroke-width="1" stroke-dasharray="4 4" stroke-dashoffset="1"/><path d="M32 180.5 H279" stroke="#5656d8" stroke-width="1" stroke-dasharray="4 4" stroke-dashoffset="6"/><path transform="translate(25 23) rotate(45)" d="M-8.0 0 L-3.8 -4.4 V-2.1 H3.8 V-4.4 L8.0 0 L3.8 4.4 V2.1 H-3.8 V4.4 Z" fill="#000"/><path transform="translate(286 23) rotate(-45)" d="M-8.0 0 L-3.8 -4.4 V-2.1 H3.8 V-4.4 L8.0 0 L3.8 4.4 V2.1 H-3.8 V4.4 Z" fill="#000"/><path transform="translate(25 188) rotate(-45)" d="M-8.0 0 L-3.8 -4.4 V-2.1 H3.8 V-4.4 L8.0 0 L3.8 4.4 V2.1 H-3.8 V4.4 Z" fill="#000"/><path transform="translate(286 188) rotate(45)" d="M-8.0 0 L-3.8 -4.4 V-2.1 H3.8 V-4.4 L8.0 0 L3.8 4.4 V2.1 H-3.8 V4.4 Z" fill="#000"/><path transform="translate(155 20) rotate(90)" d="M-7.25 0 L-3.05 -4.4 V-2.1 H3.05 V-4.4 L7.25 0 L3.05 4.4 V2.1 H-3.05 V4.4 Z" fill="#000"/><path transform="translate(155 191.5) rotate(90)" d="M-7.25 0 L-3.05 -4.4 V-2.1 H3.05 V-4.4 L7.25 0 L3.05 4.4 V2.1 H-3.05 V4.4 Z" fill="#000"/><path transform="translate(22 106) rotate(0)" d="M-7.25 0 L-3.05 -4.4 V-2.1 H3.05 V-4.4 L7.25 0 L3.05 4.4 V2.1 H-3.05 V4.4 Z" fill="#000"/><path transform="translate(289 106) rotate(0)" d="M-7.25 0 L-3.05 -4.4 V-2.1 H3.05 V-4.4 L7.25 0 L3.05 4.4 V2.1 H-3.05 V4.4 Z" fill="#000"/></svg>
<div style="position:absolute;left:767px;top:172px;width:493px;height:925px;background:#2b2b2b;"></div>
<div style="position:absolute;left:767px;top:172px;width:493px;height:37px;background:#262626;"></div>
<div style="position:absolute;left:1013px;top:172px;width:194px;height:37px;background:#2b2b2b;"></div>
<div style="position:absolute;left:1014px;top:205px;width:193px;height:4px;background:#1a5bb0;"></div>
<div style="position:absolute;left:767px;top:209px;width:493px;height:2px;background:#1e1e1e;"></div>
<div style="position:absolute;left:1230px;top:175px;width:30px;height:30px;background:#2e2e2e;border-radius:5px;"></div>
<svg style="position:absolute;left:1237px;top:183px;" width="16" height="12" viewBox="0 0 16 12"><path d="M2 2.5 L8 8.5 L14 2.5" fill="none" stroke="#a0a0a0" stroke-width="1.7"/></svg>
<svg style="position:absolute;left:787px;top:182px;" width="18" height="18" viewBox="0 0 18 18"><path d="M4 1.8 H13.2 L10.2 4.9 H1Z" fill="#0c9ce8"/><path d="M6 6.8 H15.1 L12.1 9.8 H2.9Z" fill="#7ecbf0"/><path d="M8 11.8 H17 L14 15.1 H4.9Z" fill="#f0f0f0"/></svg>
<div class="t" style="position:absolute;left:806.89px;top:177.60px;font-size:19px;line-height:25px;color:#e8e8e8;white-space:nowrap;transform:scaleX(0.7043);transform-origin:0 50%;">レイヤーとオブジェクト(S)</div>
<svg style="position:absolute;left:979px;top:185px;" width="11" height="11" viewBox="0 0 11 11"><path d="M1.5 1.5 L9.5 9.5 M9.5 1.5 L1.5 9.5" stroke="#9a9a9a" stroke-width="1.8"/></svg>
<svg style="position:absolute;left:1025px;top:181px;" width="18" height="19" viewBox="0 0 18 19"><path d="M2 14 V2 H8" fill="none" stroke="#e6e6e6" stroke-width="1.2"/><path d="M6 13 L14 3 L16 5 L8 15Z" fill="#e6e6e6"/><path d="M4 17 L7 13 L9 15Z" fill="#29a3e8"/></svg>
<div class="t" style="position:absolute;left:1044.56px;top:177.80px;font-size:19px;line-height:25px;color:#e8e8e8;white-space:nowrap;transform:scaleX(0.7207);transform-origin:0 50%;">フィル/ストローク(F)</div>
<svg style="position:absolute;left:1182px;top:185px;" width="11" height="11" viewBox="0 0 11 11"><path d="M1.5 1.5 L9.5 9.5 M9.5 1.5 L1.5 9.5" stroke="#9a9a9a" stroke-width="1.8"/></svg>
<div style="position:absolute;left:768px;top:211px;width:492px;height:779px;border:1px solid #1e1e1e;border-top:none;"></div>
<div style="position:absolute;left:769px;top:211px;width:490px;height:29px;background:#262626;"></div>
<div style="position:absolute;left:769px;top:240px;width:490px;height:1px;background:#1e1e1e;"></div>
<div style="position:absolute;left:776px;top:237px;width:91px;height:4px;background:#1a5bb0;"></div>
<div style="position:absolute;left:785px;top:219px;width:13px;height:13px;background:#e6e6e6;"></div>
<div class="t" style="position:absolute;left:802.56px;top:213.50px;font-size:19px;line-height:25px;color:#e8e8e8;white-space:nowrap;transform:scaleX(0.7179);transform-origin:0 50%;">フィル(F)</div>
<div style="position:absolute;left:884px;top:219px;width:13px;height:13px;border:1.6px solid #e6e6e6;"></div>
<div class="t" style="position:absolute;left:902.53px;top:213.50px;font-size:19px;line-height:25px;color:#e8e8e8;white-space:nowrap;transform:scaleX(0.7356);transform-origin:0 50%;">ストロークの塗り(P)</div>
<svg style="position:absolute;left:1054px;top:218px;" width="16" height="16" viewBox="0 0 16 16"><path d="M1 5 H12" stroke="#29a3e8" stroke-width="1.5"/><path d="M10 2 L14 5 L10 8" fill="none" stroke="#29a3e8" stroke-width="1.5"/><path d="M1 9 H4 M7 9 H10 M1 13 H14" stroke="#e6e6e6" stroke-width="1.5"/></svg>
<div class="t" style="position:absolute;left:1073.55px;top:214.40px;font-size:19px;line-height:25px;color:#e8e8e8;white-space:nowrap;transform:scaleX(0.7264);transform-origin:0 50%;">ストロークのスタイル(Y)</div>
<svg style="position:absolute;left:781px;top:252px;" width="12" height="12" viewBox="0 0 12 12"><path d="M2 2 L10 10 M10 2 L2 10" stroke="#e6e6e6" stroke-width="2"/></svg>
<div style="position:absolute;left:802px;top:245px;width:26px;height:26px;background:linear-gradient(#223f66,#1c3350);border:1px solid #18273a;border-radius:5px;"></div>
<div style="position:absolute;left:807px;top:250px;width:16px;height:16px;background:#0c8ce9;"></div>
<svg width="0" height="0" style="position:absolute"><defs><linearGradient id="lg2"><stop offset="0" stop-color="#0c8ce9"/><stop offset="1" stop-color="#f0f0f0"/></linearGradient><radialGradient id="rg2"><stop offset="0" stop-color="#0c8ce9"/><stop offset="0.3" stop-color="#2a9cf0"/><stop offset="1" stop-color="#f0f0f0"/></radialGradient><linearGradient id="mg2" x1="0" y1="0" x2="1" y2="1"><stop offset="0" stop-color="#0c8ce9"/><stop offset="0.5" stop-color="#f0f0f0"/><stop offset="1" stop-color="#0c8ce9"/></linearGradient></defs></svg>
<svg style="position:absolute;left:835px;top:250px;" width="17" height="17" viewBox="0 0 17 17"><rect x="0.5" y="0.5" width="16" height="16" fill="url(#lg2)"/></svg>
<svg style="position:absolute;left:863px;top:250px;" width="17" height="17" viewBox="0 0 17 17"><rect x="0.5" y="0.5" width="16" height="16" fill="url(#rg2)"/></svg>
<svg style="position:absolute;left:891px;top:250px;" width="17" height="17" viewBox="0 0 17 17"><rect x="0.5" y="0.5" width="16" height="16" fill="url(#mg2)"/></svg>
<svg style="position:absolute;left:919px;top:250px;" width="16" height="16" viewBox="0 0 16 16"><defs><clipPath id="pc"><rect x="0" y="0" width="16" height="16"/></clipPath></defs><g clip-path="url(#pc)"><rect x="0" y="0" width="16" height="16" fill="#eeeeee"/><path d="M-1.2 0.6999999999999997 L2.4000000000000004 4.3 L-1.2 7.9 L-4.8 4.3Z M-1.2 8.200000000000001 L2.4000000000000004 11.8 L-1.2 15.4 L-4.8 11.8Z M6 0.6999999999999997 L9.6 4.3 L6 7.9 L2.4 4.3Z M6 8.200000000000001 L9.6 11.8 L6 15.4 L2.4 11.8Z M13.2 0.6999999999999997 L16.8 4.3 L13.2 7.9 L9.6 4.3Z M13.2 8.200000000000001 L16.8 11.8 L13.2 15.4 L9.6 11.8Z M20.4 0.6999999999999997 L24.0 4.3 L20.4 7.9 L16.799999999999997 4.3Z M20.4 8.200000000000001 L24.0 11.8 L20.4 15.4 L16.799999999999997 11.8Z " fill="#2b2b2b"/></g></svg>
<svg style="position:absolute;left:947px;top:250px;" width="17" height="17" viewBox="0 0 17 17"><rect x="1" y="1" width="15" height="15" fill="none" stroke="#e6e6e6" stroke-width="1.5"/><rect x="4" y="4" width="9" height="9" fill="#0c8ce9"/></svg>
<div class="t" style="position:absolute;left:978.00px;top:247.80px;font-size:17px;line-height:22px;color:#e6e6e6;white-space:nowrap;font-weight:bold;">?</div>
<svg style="position:absolute;left:1204px;top:249px;" width="18" height="18" viewBox="0 0 18 18"><path d="M3 2.5 Q6 1 8 3.5 L9 4.8 L10 3.5 Q12 1 15 2.5 Q17 8 15 12.5 Q12.5 17 9 17 Q5.5 17 3 12.5 Q1 8 3 2.5Z" fill="#e6e6e6"/><path d="M9 6.5 Q6 10.5 6.5 12.5 Q7.5 14.5 9 14.5 Q10.5 14.5 11.5 12.5 Q12 10.5 9 6.5Z" fill="#2b2b2b"/></svg>
<div style="position:absolute;left:1228px;top:245px;width:26px;height:26px;background:linear-gradient(#26528c,#1f3d63);border:1px solid #18273a;border-radius:5px;"></div>
<svg style="position:absolute;left:1232px;top:249px;" width="18" height="18" viewBox="0 0 18 18"><path d="M3 2.5 Q6 1 8 3.5 L9 4.8 L10 3.5 Q12 1 15 2.5 Q17 8 15 12.5 Q12.5 17 9 17 Q5.5 17 3 12.5 Q1 8 3 2.5Z" fill="#e6e6e6"/></svg>
<div class="t" style="position:absolute;left:776.00px;top:288.00px;font-size:19px;line-height:25px;color:#e8e8e8;white-space:nowrap;font-weight:bold;transform:scaleX(0.9123);transform-origin:0 50%;">単一色</div>
<div style="position:absolute;left:1139px;top:282px;width:113px;height:38px;background:#353535;border:1.5px solid #1a1a1a;border-radius:6px;"></div>
<svg style="position:absolute;left:1150px;top:294px;" width="16" height="13" viewBox="0 0 16 13"><rect x="0" y="0" width="16" height="12" rx="2" fill="url(#rb)"/><defs><linearGradient id="rb"><stop offset="0" stop-color="#ff0000"/><stop offset="0.2" stop-color="#ffff00"/><stop offset="0.4" stop-color="#00ff00"/><stop offset="0.6" stop-color="#00ffff"/><stop offset="0.8" stop-color="#0000ff"/><stop offset="1" stop-color="#ff00ff"/></linearGradient></defs></svg>
<div class="t" style="position:absolute;left:1175.12px;top:290.30px;font-size:18px;line-height:23px;color:#e8e8e8;white-space:nowrap;transform:scaleX(0.8824);transform-origin:0 50%;">HSL</div>
<svg style="position:absolute;left:1228px;top:295px;" width="14" height="10" viewBox="0 0 14 10"><path d="M1 1 H13 L7 8Z" fill="#e6e6e6"/></svg>
<svg style="position:absolute;left:782px;top:331px;" width="10" height="14" viewBox="0 0 10 14"><path d="M2 1 L8 7 L2 13Z" fill="#e6e6e6"/></svg>
<div style="position:absolute;left:799px;top:330px;width:16px;height:16px;border-radius:50%;background:conic-gradient(#7a10c8 0deg,#1040d0 45deg,#00a0c0 90deg,#10a040 135deg,#f0f000 180deg,#ff9000 225deg,#ff4000 270deg,#f01010 300deg,#c01090 335deg,#7a10c8 360deg);"></div>
<div style="position:absolute;left:804px;top:335px;width:6px;height:6px;border-radius:50%;background:#2b2b2b;"></div>
<div class="t" style="position:absolute;left:821.07px;top:326.50px;font-size:19px;line-height:25px;color:#e8e8e8;white-space:nowrap;transform:scaleX(0.9314);transform-origin:0 50%;">Color Wheel</div>
<div class="t" style="position:absolute;left:779.06px;top:363.80px;font-size:18px;line-height:23px;color:#e8e8e8;white-space:nowrap;transform:scaleX(0.9375);transform-origin:0 50%;">H:</div>
<div style="position:absolute;left:799px;top:356px;width:374px;height:36px;background:#1e1e1e;"></div>
<div style="position:absolute;left:800px;top:357px;width:372px;height:34px;background:linear-gradient(90deg,#ff0000 0%,#ffff00 16.67%,#00ff00 33.33%,#00ffff 50%,#0000ff 66.67%,#ff00ff 83.33%,#ff0000 100%);"></div>
<svg style="position:absolute;left:790px;top:356px;" width="392" height="36" viewBox="0 0 392 36"><path d="M128.7 1 L134.0 6.2 L139.3 1Z" fill="#fff" stroke="#1e1e1e" stroke-width="1"/><path d="M128.7 35 L134.0 29.8 L139.3 35Z" fill="#fff" stroke="#1e1e1e" stroke-width="1"/></svg>
<div style="position:absolute;left:1177px;top:357px;width:74px;height:34px;background:#2d2d2d;border:1px solid #1c1c1c;border-radius:5px;"></div>
<div style="position:absolute;left:1216px;top:358px;width:1px;height:32px;background:#262626;"></div>
<div style="position:absolute;left:1233px;top:358px;width:1px;height:32px;background:#262626;"></div>
<div class="t" style="position:absolute;left:1187.07px;top:363.80px;font-size:18px;line-height:23px;color:#e8e8e8;white-space:nowrap;transform:scaleX(0.9310);transform-origin:0 50%;">120</div>
<div style="position:absolute;left:1219px;top:373px;width:12px;height:2px;background:#e6e6e6;"></div>
<div style="position:absolute;left:1236px;top:373px;width:12px;height:2px;background:#e6e6e6;"></div>
<div style="position:absolute;left:1241px;top:368px;width:2px;height:12px;background:#e6e6e6;"></div>
<div class="t" style="position:absolute;left:779.00px;top:401.80px;font-size:18px;line-height:23px;color:#e8e8e8;white-space:nowrap;">S:</div>
<div style="position:absolute;left:799px;top:394px;width:374px;height:36px;background:#1e1e1e;"></div>
<div style="position:absolute;left:800px;top:395px;width:372px;height:34px;background:linear-gradient(90deg,#808080,#00ff00);"></div>
<svg style="position:absolute;left:790px;top:394px;" width="392" height="36" viewBox="0 0 392 36"><path d="M376.7 1 L382.0 6.2 L387.3 1Z" fill="#fff" stroke="#1e1e1e" stroke-width="1"/><path d="M376.7 35 L382.0 29.8 L387.3 35Z" fill="#fff" stroke="#1e1e1e" stroke-width="1"/></svg>
<div style="position:absolute;left:1177px;top:395px;width:74px;height:34px;background:#2d2d2d;border:1px solid #1c1c1c;border-radius:5px;"></div>
<div style="position:absolute;left:1216px;top:396px;width:1px;height:32px;background:#262626;"></div>
<div style="position:absolute;left:1233px;top:396px;width:1px;height:32px;background:#262626;"></div>
<div class="t" style="position:absolute;left:1187.07px;top:401.80px;font-size:18px;line-height:23px;color:#e8e8e8;white-space:nowrap;transform:scaleX(0.9310);transform-origin:0 50%;">100</div>
<div style="position:absolute;left:1219px;top:411px;width:12px;height:2px;background:#e6e6e6;"></div>
<div style="position:absolute;left:1236px;top:411px;width:12px;height:2px;background:#5a5a5a;"></div>
<div style="position:absolute;left:1241px;top:406px;width:2px;height:12px;background:#5a5a5a;"></div>
<div class="t" style="position:absolute;left:778.85px;top:439.80px;font-size:18px;line-height:23px;color:#e8e8e8;white-space:nowrap;transform:scaleX(1.1538);transform-origin:0 50%;">L:</div>
<div style="position:absolute;left:799px;top:432px;width:374px;height:36px;background:#1e1e1e;"></div>
<div style="position:absolute;left:800px;top:433px;width:372px;height:34px;background:linear-gradient(90deg,#000000,#00ff00 50%,#ffffff);"></div>
<svg style="position:absolute;left:790px;top:432px;" width="392" height="36" viewBox="0 0 392 36"><path d="M190.7 1 L196.0 6.2 L201.3 1Z" fill="#fff" stroke="#1e1e1e" stroke-width="1"/><path d="M190.7 35 L196.0 29.8 L201.3 35Z" fill="#fff" stroke="#1e1e1e" stroke-width="1"/></svg>
<div style="position:absolute;left:1177px;top:433px;width:74px;height:34px;background:#2d2d2d;border:1px solid #1c1c1c;border-radius:5px;"></div>
<div style="position:absolute;left:1216px;top:434px;width:1px;height:32px;background:#262626;"></div>
<div style="position:absolute;left:1233px;top:434px;width:1px;height:32px;background:#262626;"></div>
<div class="t" style="position:absolute;left:1187.05px;top:439.80px;font-size:18px;line-height:23px;color:#e8e8e8;white-space:nowrap;transform:scaleX(0.9474);transform-origin:0 50%;">50</div>
<div style="position:absolute;left:1219px;top:449px;width:12px;height:2px;background:#e6e6e6;"></div>
<div style="position:absolute;left:1236px;top:449px;width:12px;height:2px;background:#e6e6e6;"></div>
<div style="position:absolute;left:1241px;top:444px;width:2px;height:12px;background:#e6e6e6;"></div>
<div class="t" style="position:absolute;left:780.00px;top:477.80px;font-size:18px;line-height:23px;color:#e8e8e8;white-space:nowrap;transform:scaleX(0.9375);transform-origin:0 50%;">A:</div>
<div style="position:absolute;left:799px;top:470px;width:374px;height:36px;background:#1e1e1e;"></div>
<div style="position:absolute;left:800px;top:471px;width:372px;height:34px;background:linear-gradient(90deg,rgba(0,255,0,0),#00ff00),repeating-conic-gradient(#999 0% 25%,#666 0% 50%) 0 0/12px 12px;"></div>
<svg style="position:absolute;left:790px;top:470px;" width="392" height="36" viewBox="0 0 392 36"><path d="M376.7 1 L382.0 6.2 L387.3 1Z" fill="#fff" stroke="#1e1e1e" stroke-width="1"/><path d="M376.7 35 L382.0 29.8 L387.3 35Z" fill="#fff" stroke="#1e1e1e" stroke-width="1"/></svg>
<div style="position:absolute;left:1177px;top:471px;width:74px;height:34px;background:#2d2d2d;border:1px solid #1c1c1c;border-radius:5px;"></div>
<div style="position:absolute;left:1216px;top:472px;width:1px;height:32px;background:#262626;"></div>
<div style="position:absolute;left:1233px;top:472px;width:1px;height:32px;background:#262626;"></div>
<div class="t" style="position:absolute;left:1187.07px;top:477.80px;font-size:18px;line-height:23px;color:#e8e8e8;white-space:nowrap;transform:scaleX(0.9310);transform-origin:0 50%;">100</div>
<div style="position:absolute;left:1219px;top:487px;width:12px;height:2px;background:#e6e6e6;"></div>
<div style="position:absolute;left:1236px;top:487px;width:12px;height:2px;background:#5a5a5a;"></div>
<div style="position:absolute;left:1241px;top:482px;width:2px;height:12px;background:#5a5a5a;"></div>
<svg style="position:absolute;left:774px;top:958px;" width="20" height="18" viewBox="0 0 20 18"><circle cx="9" cy="5" r="4" fill="none" stroke="#8a8a8a" stroke-width="1"/><circle cx="5" cy="12" r="4" fill="#1e6b1e" stroke="#8a8a8a" stroke-width="1"/><circle cx="13" cy="12" r="4" fill="#8a1e5a" stroke="#8a8a8a" stroke-width="1"/></svg>
<svg style="position:absolute;left:795px;top:959px;" width="17" height="17" viewBox="0 0 17 17"><circle cx="8" cy="8" r="7.2" fill="none" stroke="#6a6a6a" stroke-width="1"/><rect x="5.5" y="5.5" width="5" height="5" fill="none" stroke="#6a6a6a" stroke-width="1"/></svg>
<svg style="position:absolute;left:825px;top:959px;" width="17" height="17" viewBox="0 0 17 17"><path d="M3 16 L11 8 L13 10 L5 17Z" fill="none" stroke="#e6e6e6" stroke-width="1.5"/><path d="M10 6 L14 2 Q16 1 16 3 L12 8Z M9 6 L13 10" stroke="#e6e6e6" stroke-width="1.6" fill="#e6e6e6"/><path d="M3 1 Q0 5 3 6 Q6 5 3 1Z" fill="#1a9ae8"/></svg>
<div class="t" style="position:absolute;left:1088.14px;top:956.80px;font-size:18px;line-height:23px;color:#e8e8e8;white-space:nowrap;transform:scaleX(0.8592);transform-origin:0 50%;">RGBA(:):</div>
<div style="position:absolute;left:1156px;top:951px;width:96px;height:32px;background:#2d2d2d;border:1px solid #1c1c1c;border-radius:5px;"></div>
<div class="t" style="position:absolute;left:1163.97px;top:956.80px;font-size:18px;line-height:23px;color:#e8e8e8;white-space:nowrap;transform:scaleX(1.0339);transform-origin:0 50%;">00ff00ff</div>
<div class="t" style="position:absolute;left:1016.61px;top:999.00px;font-size:19px;line-height:25px;color:#e8e8e8;white-space:nowrap;transform:scaleX(0.6963);transform-origin:0 50%;">ブレンドモード:</div>
<div style="position:absolute;left:1117px;top:993px;width:140px;height:37px;background:#353535;border:1.5px solid #1a1a1a;border-radius:6px;"></div>
<div class="t" style="position:absolute;left:1129.00px;top:999.00px;font-size:19px;line-height:25px;color:#e8e8e8;white-space:nowrap;transform:scaleX(0.9189);transform-origin:0 50%;">標準</div>
<svg style="position:absolute;left:1233px;top:1007px;" width="14" height="10" viewBox="0 0 14 10"><path d="M1 1 H13 L7 8Z" fill="#e6e6e6"/></svg>
<div style="position:absolute;left:773px;top:1035px;width:483px;height:26px;background:#262626;border:1px solid #1c1c1c;border-radius:4px;"></div>
<div style="position:absolute;left:774px;top:1036px;width:2px;height:24px;background:#0f3563;"></div>
<div style="position:absolute;left:1166px;top:1036px;width:1px;height:24px;background:#1e1e1e;"></div>
<div class="t" style="position:absolute;left:778.22px;top:1035.60px;font-size:19px;line-height:25px;color:#e8e8e8;white-space:nowrap;transform:scaleX(0.7778);transform-origin:0 50%;">ぼかし (%)</div>
<div class="t" style="position:absolute;left:1176.08px;top:1037.90px;font-size:18px;line-height:23px;color:#e8e8e8;white-space:nowrap;transform:scaleX(0.9167);transform-origin:0 50%;">0.0</div>
<div style="position:absolute;left:1222px;top:1047px;width:13px;height:2px;background:#5a5a5a;"></div>
<div style="position:absolute;left:1240px;top:1047px;width:13px;height:2px;background:#e6e6e6;"></div>
<div style="position:absolute;left:1246px;top:1041px;width:2px;height:14px;background:#e6e6e6;"></div>
<div style="position:absolute;left:773px;top:1065px;width:483px;height:27px;background:#262626;border:1px solid #1c1c1c;border-radius:4px;"></div>
<div style="position:absolute;left:774px;top:1066px;width:392px;height:25px;background:#1a55a0;border-radius:3px 0 0 3px;"></div>
<div class="t" style="position:absolute;left:778.00px;top:1066.30px;font-size:19px;line-height:25px;color:#e8e8e8;white-space:nowrap;transform:scaleX(0.9182);transform-origin:0 50%;">不透明度 (%)</div>
<div class="t" style="position:absolute;left:1177.05px;top:1068.60px;font-size:18px;line-height:23px;color:#e8e8e8;white-space:nowrap;transform:scaleX(0.9545);transform-origin:0 50%;">100.0</div>
<div style="position:absolute;left:1222px;top:1078px;width:13px;height:2px;background:#e6e6e6;"></div>
<div style="position:absolute;left:1240px;top:1078px;width:13px;height:2px;background:#5a5a5a;"></div>
<div style="position:absolute;left:1246px;top:1072px;width:2px;height:14px;background:#5a5a5a;"></div>
<svg style="position:absolute;left:36px;top:1103px;" width="1164" height="35" viewBox="0 0 1164 35"><rect x="1.0" y="1.5" width="21.0" height="15.0" fill="#000000" stroke="rgba(0,0,0,0.25)" stroke-width="1"/><rect x="1.0" y="18.0" width="21.0" height="15.5" fill="#552200" stroke="rgba(0,0,0,0.25)" stroke-width="1"/><rect x="23.0" y="1.5" width="21.0" height="15.0" fill="#1a1a1a" stroke="rgba(0,0,0,0.25)" stroke-width="1"/><rect x="23.0" y="18.0" width="21.0" height="15.5" fill="#803300" stroke="rgba(0,0,0,0.25)" stroke-width="1"/><rect x="45.0" y="1.5" width="21.0" height="15.0" fill="#333333" stroke="rgba(0,0,0,0.25)" stroke-width="1"/><rect x="45.0" y="18.0" width="21.0" height="15.5" fill="#aa4400" stroke="rgba(0,0,0,0.25)" stroke-width="1"/><rect x="67.0" y="1.5" width="21.0" height="15.0" fill="#4d4d4d" stroke="rgba(0,0,0,0.25)" stroke-width="1"/><rect x="67.0" y="18.0" width="21.0" height="15.5" fill="#d45500" stroke="rgba(0,0,0,0.25)" stroke-width="1"/><rect x="89.0" y="1.5" width="21.0" height="15.0" fill="#666666" stroke="rgba(0,0,0,0.25)" stroke-width="1"/><rect x="89.0" y="18.0" width="21.0" height="15.5" fill="#ff6600" stroke="rgba(0,0,0,0.25)" stroke-width="1"/><rect x="111.0" y="1.5" width="21.0" height="15.0" fill="#808080" stroke="rgba(0,0,0,0.25)" stroke-width="1"/><rect x="111.0" y="18.0" width="21.0" height="15.5" fill="#ff7f2a" stroke="rgba(0,0,0,0.25)" stroke-width="1"/><rect x="133.0" y="1.5" width="21.0" height="15.0" fill="#999999" stroke="rgba(0,0,0,0.25)" stroke-width="1"/><rect x="133.0" y="18.0" width="21.0" height="15.5" fill="#ff9955" stroke="rgba(0,0,0,0.25)" stroke-width="1"/><rect x="155.0" y="1.5" width="21.0" height="15.0" fill="#b3b3b3" stroke="rgba(0,0,0,0.25)" stroke-width="1"/><rect x="155.0" y="18.0" width="21.0" height="15.5" fill="#ffb380" stroke="rgba(0,0,0,0.25)" stroke-width="1"/><rect x="177.0" y="1.5" width="21.0" height="15.0" fill="#cccccc" stroke="rgba(0,0,0,0.25)" stroke-width="1"/><rect x="177.0" y="18.0" width="21.0" height="15.5" fill="#ffccaa" stroke="rgba(0,0,0,0.25)" stroke-width="1"/><rect x="199.0" y="1.5" width="21.0" height="15.0" fill="#e6e6e6" stroke="rgba(0,0,0,0.25)" stroke-width="1"/><rect x="199.0" y="18.0" width="21.0" height="15.5" fill="#ffe6d5" stroke="rgba(0,0,0,0.25)" stroke-width="1"/><rect x="221.0" y="1.5" width="21.0" height="15.0" fill="#ececec" stroke="rgba(0,0,0,0.25)" stroke-width="1"/><rect x="221.0" y="18.0" width="21.0" height="15.5" fill="#2b1100" stroke="rgba(0,0,0,0.25)" stroke-width="1"/><rect x="243.0" y="1.5" width="21.0" height="15.0" fill="#f2f2f2" stroke="rgba(0,0,0,0.25)" stroke-width="1"/><rect x="243.0" y="18.0" width="21.0" height="15.5" fill="#502d16" stroke="rgba(0,0,0,0.25)" stroke-width="1"/><rect x="265.0" y="1.5" width="21.0" height="15.0" fill="#f8f8f8" stroke="rgba(0,0,0,0.25)" stroke-width="1"/><rect x="265.0" y="18.0" width="21.0" height="15.5" fill="#784421" stroke="rgba(0,0,0,0.25)" stroke-width="1"/><rect x="287.0" y="1.5" width="21.0" height="15.0" fill="#ffffff" stroke="rgba(0,0,0,0.25)" stroke-width="1"/><rect x="287.0" y="18.0" width="21.0" height="15.5" fill="#a05a2c" stroke="rgba(0,0,0,0.25)" stroke-width="1"/><rect x="309.0" y="1.5" width="21.0" height="15.0" fill="#800000" stroke="rgba(0,0,0,0.25)" stroke-width="1"/><rect x="309.0" y="18.0" width="21.0" height="15.5" fill="#c87137" stroke="rgba(0,0,0,0.25)" stroke-width="1"/><rect x="331.0" y="1.5" width="21.0" height="15.0" fill="#ff0000" stroke="rgba(0,0,0,0.25)" stroke-width="1"/><rect x="331.0" y="18.0" width="21.0" height="15.5" fill="#d38d5f" stroke="rgba(0,0,0,0.25)" stroke-width="1"/><rect x="353.0" y="1.5" width="21.0" height="15.0" fill="#808000" stroke="rgba(0,0,0,0.25)" stroke-width="1"/><rect x="353.0" y="18.0" width="21.0" height="15.5" fill="#deaa87" stroke="rgba(0,0,0,0.25)" stroke-width="1"/><rect x="375.0" y="1.5" width="21.0" height="15.0" fill="#ffff00" stroke="rgba(0,0,0,0.25)" stroke-width="1"/><rect x="375.0" y="18.0" width="21.0" height="15.5" fill="#e9c6af" stroke="rgba(0,0,0,0.25)" stroke-width="1"/><rect x="397.0" y="1.5" width="21.0" height="15.0" fill="#008000" stroke="rgba(0,0,0,0.25)" stroke-width="1"/><rect x="397.0" y="18.0" width="21.0" height="15.5" fill="#f4e3d7" stroke="rgba(0,0,0,0.25)" stroke-width="1"/><rect x="419.0" y="1.5" width="21.0" height="15.0" fill="#00ff00" stroke="rgba(0,0,0,0.25)" stroke-width="1"/><rect x="419.0" y="18.0" width="21.0" height="15.5" fill="#241f1c" stroke="rgba(0,0,0,0.25)" stroke-width="1"/><rect x="441.0" y="1.5" width="21.0" height="15.0" fill="#008080" stroke="rgba(0,0,0,0.25)" stroke-width="1"/><rect x="441.0" y="18.0" width="21.0" height="15.5" fill="#483e37" stroke="rgba(0,0,0,0.25)" stroke-width="1"/><rect x="463.0" y="1.5" width="21.0" height="15.0" fill="#00ffff" stroke="rgba(0,0,0,0.25)" stroke-width="1"/><rect x="463.0" y="18.0" width="21.0" height="15.5" fill="#6c5d53" stroke="rgba(0,0,0,0.25)" stroke-width="1"/><rect x="485.0" y="1.5" width="21.0" height="15.0" fill="#000080" stroke="rgba(0,0,0,0.25)" stroke-width="1"/><rect x="485.0" y="18.0" width="21.0" height="15.5" fill="#917c6f" stroke="rgba(0,0,0,0.25)" stroke-width="1"/><rect x="507.0" y="1.5" width="21.0" height="15.0" fill="#0000ff" stroke="rgba(0,0,0,0.25)" stroke-width="1"/><rect x="507.0" y="18.0" width="21.0" height="15.5" fill="#ac9d93" stroke="rgba(0,0,0,0.25)" stroke-width="1"/><rect x="529.0" y="1.5" width="21.0" height="15.0" fill="#800080" stroke="rgba(0,0,0,0.25)" stroke-width="1"/><rect x="529.0" y="18.0" width="21.0" height="15.5" fill="#c8beb7" stroke="rgba(0,0,0,0.25)" stroke-width="1"/><rect x="551.0" y="1.5" width="21.0" height="15.0" fill="#ff00ff" stroke="rgba(0,0,0,0.25)" stroke-width="1"/><rect x="551.0" y="18.0" width="21.0" height="15.5" fill="#e3dedb" stroke="rgba(0,0,0,0.25)" stroke-width="1"/><rect x="573.0" y="1.5" width="21.0" height="15.0" fill="#2b0000" stroke="rgba(0,0,0,0.25)" stroke-width="1"/><rect x="573.0" y="18.0" width="21.0" height="15.5" fill="#2b2200" stroke="rgba(0,0,0,0.25)" stroke-width="1"/><rect x="595.0" y="1.5" width="21.0" height="15.0" fill="#550000" stroke="rgba(0,0,0,0.25)" stroke-width="1"/><rect x="595.0" y="18.0" width="21.0" height="15.5" fill="#554400" stroke="rgba(0,0,0,0.25)" stroke-width="1"/><rect x="617.0" y="1.5" width="21.0" height="15.0" fill="#800000" stroke="rgba(0,0,0,0.25)" stroke-width="1"/><rect x="617.0" y="18.0" width="21.0" height="15.5" fill="#806600" stroke="rgba(0,0,0,0.25)" stroke-width="1"/><rect x="639.0" y="1.5" width="20.5" height="15.0" fill="#aa0000" stroke="rgba(0,0,0,0.25)" stroke-width="1"/><rect x="639.0" y="18.0" width="20.5" height="15.5" fill="#aa8800" stroke="rgba(0,0,0,0.25)" stroke-width="1"/><rect x="660.5" y="1.5" width="20.0" height="15.0" fill="#d40000" stroke="rgba(0,0,0,0.25)" stroke-width="1"/><rect x="660.5" y="18.0" width="20.0" height="15.5" fill="#d4aa00" stroke="rgba(0,0,0,0.25)" stroke-width="1"/><rect x="681.5" y="1.5" width="20.0" height="15.0" fill="#ff0000" stroke="rgba(0,0,0,0.25)" stroke-width="1"/><rect x="681.5" y="18.0" width="20.0" height="15.5" fill="#ffcc00" stroke="rgba(0,0,0,0.25)" stroke-width="1"/><rect x="702.5" y="1.5" width="20.0" height="15.0" fill="#ff2a2a" stroke="rgba(0,0,0,0.25)" stroke-width="1"/><rect x="702.5" y="18.0" width="20.0" height="15.5" fill="#ffd42a" stroke="rgba(0,0,0,0.25)" stroke-width="1"/><rect x="723.5" y="1.5" width="20.0" height="15.0" fill="#ff5555" stroke="rgba(0,0,0,0.25)" stroke-width="1"/><rect x="723.5" y="18.0" width="20.0" height="15.5" fill="#ffdd55" stroke="rgba(0,0,0,0.25)" stroke-width="1"/><rect x="744.5" y="1.5" width="20.0" height="15.0" fill="#ff8080" stroke="rgba(0,0,0,0.25)" stroke-width="1"/><rect x="744.5" y="18.0" width="20.0" height="15.5" fill="#ffe680" stroke="rgba(0,0,0,0.25)" stroke-width="1"/><rect x="765.5" y="1.5" width="20.0" height="15.0" fill="#ffaaaa" stroke="rgba(0,0,0,0.25)" stroke-width="1"/><rect x="765.5" y="18.0" width="20.0" height="15.5" fill="#ffeeaa" stroke="rgba(0,0,0,0.25)" stroke-width="1"/><rect x="786.5" y="1.5" width="20.0" height="15.0" fill="#ffd5d5" stroke="rgba(0,0,0,0.25)" stroke-width="1"/><rect x="786.5" y="18.0" width="20.0" height="15.5" fill="#fff6d5" stroke="rgba(0,0,0,0.25)" stroke-width="1"/><rect x="807.5" y="1.5" width="20.0" height="15.0" fill="#280b0b" stroke="rgba(0,0,0,0.25)" stroke-width="1"/><rect x="807.5" y="18.0" width="20.0" height="15.5" fill="#28220b" stroke="rgba(0,0,0,0.25)" stroke-width="1"/><rect x="828.5" y="1.5" width="20.0" height="15.0" fill="#501616" stroke="rgba(0,0,0,0.25)" stroke-width="1"/><rect x="828.5" y="18.0" width="20.0" height="15.5" fill="#504416" stroke="rgba(0,0,0,0.25)" stroke-width="1"/><rect x="849.5" y="1.5" width="20.0" height="15.0" fill="#782121" stroke="rgba(0,0,0,0.25)" stroke-width="1"/><rect x="849.5" y="18.0" width="20.0" height="15.5" fill="#786721" stroke="rgba(0,0,0,0.25)" stroke-width="1"/><rect x="870.5" y="1.5" width="20.0" height="15.0" fill="#a02c2c" stroke="rgba(0,0,0,0.25)" stroke-width="1"/><rect x="870.5" y="18.0" width="20.0" height="15.5" fill="#a0892c" stroke="rgba(0,0,0,0.25)" stroke-width="1"/><rect x="891.5" y="1.5" width="20.0" height="15.0" fill="#c83737" stroke="rgba(0,0,0,0.25)" stroke-width="1"/><rect x="891.5" y="18.0" width="20.0" height="15.5" fill="#c8ab37" stroke="rgba(0,0,0,0.25)" stroke-width="1"/><rect x="912.5" y="1.5" width="20.0" height="15.0" fill="#d35f5f" stroke="rgba(0,0,0,0.25)" stroke-width="1"/><rect x="912.5" y="18.0" width="20.0" height="15.5" fill="#d3bc5f" stroke="rgba(0,0,0,0.25)" stroke-width="1"/><rect x="933.5" y="1.5" width="20.0" height="15.0" fill="#de8787" stroke="rgba(0,0,0,0.25)" stroke-width="1"/><rect x="933.5" y="18.0" width="20.0" height="15.5" fill="#decd87" stroke="rgba(0,0,0,0.25)" stroke-width="1"/><rect x="954.5" y="1.5" width="20.0" height="15.0" fill="#e9afaf" stroke="rgba(0,0,0,0.25)" stroke-width="1"/><rect x="954.5" y="18.0" width="20.0" height="15.5" fill="#e9ddaf" stroke="rgba(0,0,0,0.25)" stroke-width="1"/><rect x="975.5" y="1.5" width="20.0" height="15.0" fill="#f4d7d7" stroke="rgba(0,0,0,0.25)" stroke-width="1"/><rect x="975.5" y="18.0" width="20.0" height="15.5" fill="#f4eed7" stroke="rgba(0,0,0,0.25)" stroke-width="1"/><rect x="996.5" y="1.5" width="20.0" height="15.0" fill="#241c1c" stroke="rgba(0,0,0,0.25)" stroke-width="1"/><rect x="996.5" y="18.0" width="20.0" height="15.5" fill="#24221c" stroke="rgba(0,0,0,0.25)" stroke-width="1"/><rect x="1017.5" y="1.5" width="20.0" height="15.0" fill="#483737" stroke="rgba(0,0,0,0.25)" stroke-width="1"/><rect x="1017.5" y="18.0" width="20.0" height="15.5" fill="#484537" stroke="rgba(0,0,0,0.25)" stroke-width="1"/><rect x="1038.5" y="1.5" width="20.0" height="15.0" fill="#6c5353" stroke="rgba(0,0,0,0.25)" stroke-width="1"/><rect x="1038.5" y="18.0" width="20.0" height="15.5" fill="#6c6753" stroke="rgba(0,0,0,0.25)" stroke-width="1"/><rect x="1059.5" y="1.5" width="20.0" height="15.0" fill="#916f6f" stroke="rgba(0,0,0,0.25)" stroke-width="1"/><rect x="1059.5" y="18.0" width="20.0" height="15.5" fill="#918a6f" stroke="rgba(0,0,0,0.25)" stroke-width="1"/><rect x="1080.5" y="1.5" width="20.0" height="15.0" fill="#ac9393" stroke="rgba(0,0,0,0.25)" stroke-width="1"/><rect x="1080.5" y="18.0" width="20.0" height="15.5" fill="#aca793" stroke="rgba(0,0,0,0.25)" stroke-width="1"/><rect x="1101.5" y="1.5" width="20.0" height="15.0" fill="#c8b7b7" stroke="rgba(0,0,0,0.25)" stroke-width="1"/><rect x="1101.5" y="18.0" width="20.0" height="15.5" fill="#c8c4b7" stroke="rgba(0,0,0,0.25)" stroke-width="1"/><rect x="1122.5" y="1.5" width="20.0" height="15.0" fill="#e3dbdb" stroke="rgba(0,0,0,0.25)" stroke-width="1"/><rect x="1122.5" y="18.0" width="20.0" height="15.5" fill="#e3e2db" stroke="rgba(0,0,0,0.25)" stroke-width="1"/><rect x="1143.5" y="1.5" width="19.0" height="15.0" fill="#2b1100" stroke="rgba(0,0,0,0.25)" stroke-width="1"/><rect x="1143.5" y="18.0" width="19.0" height="15.5" fill="#222b00" stroke="rgba(0,0,0,0.25)" stroke-width="1"/><circle cx="429.0" cy="9" r="3" fill="#009900"/></svg>
<div style="position:absolute;left:3px;top:1104px;width:33px;height:33px;background:#ffffff;"></div>
<svg style="position:absolute;left:3px;top:1104px;" width="33" height="33" viewBox="0 0 33 33"><path d="M4 4 L29 29 M29 4 L4 29" stroke="#c8203a" stroke-width="2.6"/></svg>
<svg style="position:absolute;left:1203px;top:1115px;" width="16" height="12" viewBox="0 0 16 12"><path d="M1.5 8 L7 2.5 L12.5 8" fill="none" stroke="#7a7a7a" stroke-width="1.8"/></svg>
<svg style="position:absolute;left:1226px;top:1114px;" width="16" height="12" viewBox="0 0 16 12"><path d="M1.5 3 L7 8.5 L12.5 3" fill="none" stroke="#e6e6e6" stroke-width="1.8"/></svg>
<svg style="position:absolute;left:1247px;top:1113px;" width="18" height="18" viewBox="0 0 18 18"><path d="M1.5 6 H15 M1.5 11 H15 M1.5 16 H15" stroke="#f0f0f0" stroke-width="2"/></svg>
<div class="t" style="position:absolute;left:28.64px;top:1139.80px;font-size:19px;line-height:25px;color:#e8e8e8;white-space:nowrap;transform:scaleX(0.6780);transform-origin:0 50%;">フィル:</div>
<div class="t" style="position:absolute;left:1.62px;top:1164.60px;font-size:19px;line-height:25px;color:#e8e8e8;white-space:nowrap;transform:scaleX(0.6907);transform-origin:0 50%;">ストローク:</div>
<div style="position:absolute;left:91px;top:1139px;width:50px;height:24px;background:#00ff00;border-radius:3px;"></div>
<div style="position:absolute;left:91px;top:1164px;width:50px;height:24px;background:#ff9797;border-radius:3px;"></div>
<div class="t" style="position:absolute;left:150.06px;top:1166.30px;font-size:18px;line-height:23px;color:#e8e8e8;white-space:nowrap;transform:scaleX(0.9412);transform-origin:0 50%;">3.00</div>
<div class="t" style="position:absolute;left:189.00px;top:1154.30px;font-size:18px;line-height:23px;color:#e8e8e8;white-space:nowrap;">O:</div>
<div style="position:absolute;left:211px;top:1140px;width:75px;height:48px;background:#2d2d2d;border:1px solid #1c1c1c;border-radius:5px;"></div>
<div style="position:absolute;left:251px;top:1141px;width:1px;height:46px;background:#262626;"></div>
<div style="position:absolute;left:268px;top:1141px;width:1px;height:46px;background:#262626;"></div>
<div class="t" style="position:absolute;left:221.03px;top:1154.30px;font-size:18px;line-height:23px;color:#e8e8e8;white-space:nowrap;transform:scaleX(0.9655);transform-origin:0 50%;">100</div>
<div style="position:absolute;left:254px;top:1164px;width:12px;height:2px;background:#e6e6e6;"></div>
<div style="position:absolute;left:271px;top:1164px;width:12px;height:2px;background:#5a5a5a;"></div>
<div style="position:absolute;left:276px;top:1159px;width:2px;height:12px;background:#5a5a5a;"></div>
<div style="position:absolute;left:297px;top:1151px;width:3px;height:26px;background:#3a7be0;"></div>
<div class="t" style="position:absolute;left:306.09px;top:1154.30px;font-size:18px;line-height:23px;color:#e8e8e8;white-space:nowrap;transform:scaleX(0.9138);transform-origin:0 50%;">Layer 1</div>
<svg style="position:absolute;left:382px;top:1157px;" width="17" height="15" viewBox="0 0 17 15"><path d="M1 8 Q8.5 0 16 8 Q8.5 15 1 8Z" fill="none" stroke="#e6e6e6" stroke-width="1.8"/><circle cx="8.5" cy="8" r="3" fill="#e6e6e6"/><path d="M3 3 L1.5 1 M8.5 2 V0 M14 3 L15.5 1" stroke="#e6e6e6" stroke-width="1.4"/></svg>
<svg style="position:absolute;left:420px;top:1157px;" width="16" height="15" viewBox="0 0 16 15"><path d="M7 7 V4.5 A3 3 0 0 1 13 4.5 V6" fill="none" stroke="#e6e6e6" stroke-width="1.8"/><rect x="1" y="7" width="9" height="7" fill="#e6e6e6"/></svg>
<div style="position:absolute;left:446px;top:1140px;width:1px;height:48px;background:#2a2a2a;"></div>
<div class="t" style="position:absolute;left:453.00px;top:1139.30px;font-size:19px;line-height:25px;color:#e8e8e8;white-space:nowrap;transform:scaleX(0.7685);transform-origin:0 50%;"><b>パス</b> 3 ノード 所属: レイヤー <b>Layer 1</b>. 選択オブジェクトのクリッ</div>
<div class="t" style="position:absolute;left:451.38px;top:1164.60px;font-size:19px;line-height:25px;color:#e8e8e8;white-space:nowrap;transform:scaleX(0.8099);transform-origin:0 50%;">クで拡大縮小ハンドル/回転ハンドルが切り替わります.</div>
<div style="position:absolute;left:887px;top:1142px;width:1px;height:41px;background:#2a2a2a;"></div>
<div class="t" style="position:absolute;left:893.13px;top:1142.00px;font-size:18px;line-height:23px;color:#e8e8e8;white-space:nowrap;transform:scaleX(0.8667);transform-origin:0 50%;">X:</div>
<div class="t" style="position:absolute;left:923.00px;top:1142.00px;font-size:18px;line-height:23px;color:#e8e8e8;white-space:nowrap;">110.75</div>
<div class="t" style="position:absolute;left:893.14px;top:1166.70px;font-size:18px;line-height:23px;color:#e8e8e8;white-space:nowrap;transform:scaleX(0.8571);transform-origin:0 50%;">Y:</div>
<div class="t" style="position:absolute;left:923.02px;top:1166.70px;font-size:18px;line-height:23px;color:#e8e8e8;white-space:nowrap;transform:scaleX(0.9811);transform-origin:0 50%;">244.98</div>
<div class="t" style="position:absolute;left:990.00px;top:1154.30px;font-size:18px;line-height:23px;color:#e8e8e8;white-space:nowrap;transform:scaleX(0.8667);transform-origin:0 50%;">Z:</div>
<div style="position:absolute;left:1008px;top:1139px;width:103px;height:49px;background:#2d2d2d;border:1px solid #1c1c1c;border-radius:5px;"></div>
<div style="position:absolute;left:1078px;top:1140px;width:1px;height:47px;background:#262626;"></div>
<div style="position:absolute;left:1094px;top:1140px;width:1px;height:47px;background:#262626;"></div>
<div class="t" style="position:absolute;left:1028.09px;top:1154.30px;font-size:18px;line-height:23px;color:#e8e8e8;white-space:nowrap;transform:scaleX(0.9143);transform-origin:0 50%;">79%</div>
<div style="position:absolute;left:1080px;top:1164px;width:12px;height:2px;background:#e6e6e6;"></div>
<div style="position:absolute;left:1097px;top:1164px;width:12px;height:2px;background:#e6e6e6;"></div>
<div style="position:absolute;left:1102px;top:1159px;width:2px;height:12px;background:#e6e6e6;"></div>
<div class="t" style="position:absolute;left:1122.12px;top:1154.30px;font-size:18px;line-height:23px;color:#e8e8e8;white-space:nowrap;transform:scaleX(0.8750);transform-origin:0 50%;">R:</div>
<div style="position:absolute;left:1141px;top:1139px;width:115px;height:49px;background:#2d2d2d;border:1px solid #1c1c1c;border-radius:5px;"></div>
<div style="position:absolute;left:1221px;top:1140px;width:1px;height:47px;background:#262626;"></div>
<div style="position:absolute;left:1238px;top:1140px;width:1px;height:47px;background:#262626;"></div>
<div class="t" style="position:absolute;left:1164.97px;top:1154.30px;font-size:18px;line-height:23px;color:#e8e8e8;white-space:nowrap;transform:scaleX(1.0250);transform-origin:0 50%;">0.00°</div>
<div style="position:absolute;left:1224px;top:1164px;width:12px;height:2px;background:#e6e6e6;"></div>
<div style="position:absolute;left:1241px;top:1164px;width:12px;height:2px;background:#e6e6e6;"></div>
<div style="position:absolute;left:1246px;top:1159px;width:2px;height:12px;background:#e6e6e6;"></div>
<div style="position:absolute;left:742px;top:1089px;width:4px;height:4px;background:#e6e6e6;border-radius:50%;"></div>
</body></html>
